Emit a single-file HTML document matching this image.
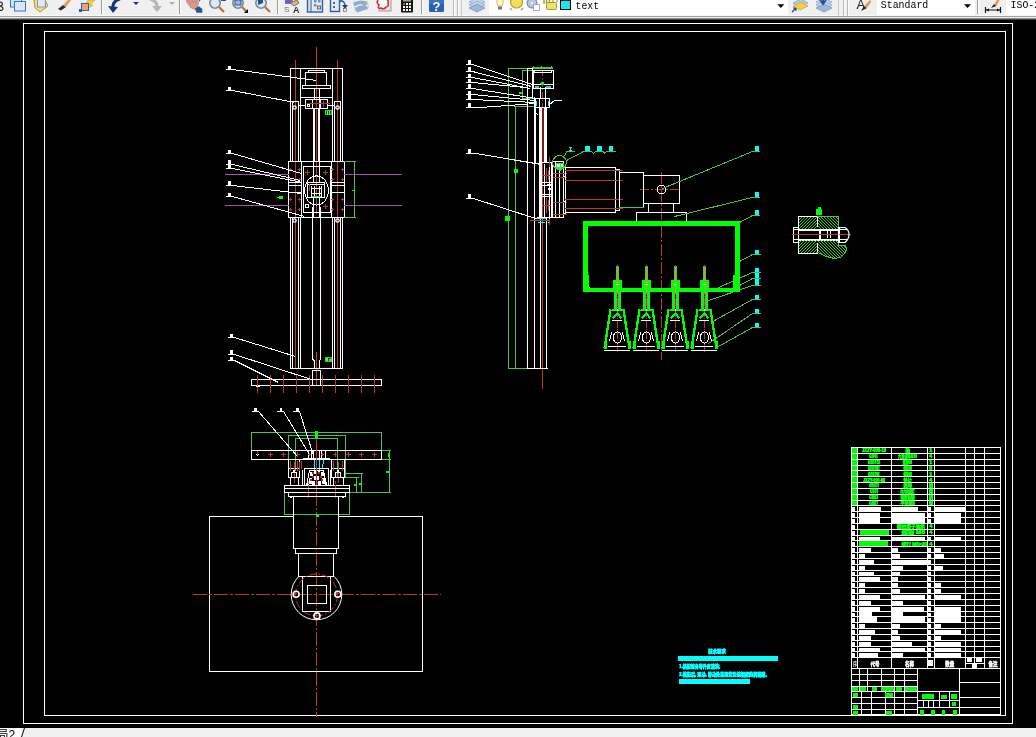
<!DOCTYPE html>
<html lang="zh">
<head>
<meta charset="utf-8">
<title>CAD drawing</title>
<style>
html,body{margin:0;padding:0;background:#000;overflow:hidden}
body{width:1036px;height:737px;position:relative;font-family:"Liberation Sans","Noto Sans CJK SC",sans-serif}
svg{position:absolute;left:0;top:0;display:block}
#crisp{shape-rendering:crispEdges}
#crisp path,#crisp rect,#crisp circle,#crisp ellipse{vector-effect:none}
text{white-space:pre}
#smooth{will-change:transform;transform:translateZ(0)}
</style>
</head>
<body>
<svg id="crisp" width="1036" height="737" viewBox="0 0 1036 737" fill="none">
<rect x="0" y="0" width="1036" height="737" fill="#000"/>
<rect x="23.5" y="23.5" width="989" height="700" fill="none" stroke="#ffffff" stroke-width="1"/>
<rect x="44.5" y="31.5" width="961" height="684" fill="none" stroke="#ffffff" stroke-width="1"/>
<rect x="0" y="728" width="1036" height="9" fill="#f0f0f0"/>
<rect x="0" y="728" width="22" height="9" fill="#fafafa"/>
<path d="M295.5 60V368" stroke="#c03434" stroke-width="1"/>
<path d="M337.5 60V368" stroke="#c03434" stroke-width="1"/>
<path d="M316.5 47V214" stroke="#c03434" stroke-width="1"/>
<path d="M316.5 352V386" stroke="#c03434" stroke-width="1"/>
<path d="M290 68.5H343" stroke="#ffffff" stroke-width="1"/>
<path d="M290.5 68V162" stroke="#ffffff" stroke-width="1"/>
<path d="M290.5 217V369" stroke="#ffffff" stroke-width="1"/>
<path d="M342.5 68V162" stroke="#ffffff" stroke-width="1"/>
<path d="M342.5 217V369" stroke="#ffffff" stroke-width="1"/>
<path d="M300.5 68V162" stroke="#ffffff" stroke-width="1"/>
<path d="M300.5 217V369" stroke="#ffffff" stroke-width="1"/>
<path d="M332.5 68V162" stroke="#ffffff" stroke-width="1"/>
<path d="M332.5 217V369" stroke="#ffffff" stroke-width="1"/>
<path d="M290 368.5H343" stroke="#ffffff" stroke-width="1"/>
<path d="M292 101.5H299" stroke="#ffffff" stroke-width="1"/>
<path d="M292.5 101V162" stroke="#ffffff" stroke-width="1"/>
<path d="M298.5 101V162" stroke="#ffffff" stroke-width="1"/>
<path d="M292.5 217V369" stroke="#ffffff" stroke-width="1"/>
<path d="M298.5 217V369" stroke="#ffffff" stroke-width="1"/>
<path d="M334 101.5H341" stroke="#ffffff" stroke-width="1"/>
<path d="M334.5 101V162" stroke="#ffffff" stroke-width="1"/>
<path d="M340.5 101V162" stroke="#ffffff" stroke-width="1"/>
<path d="M334.5 217V369" stroke="#ffffff" stroke-width="1"/>
<path d="M340.5 217V369" stroke="#ffffff" stroke-width="1"/>
<rect x="305.5" y="72.5" width="21" height="13" fill="none" stroke="#ffffff" stroke-width="1"/>
<rect x="308.5" y="70.5" width="16" height="2" fill="none" stroke="#ffffff" stroke-width="1"/>
<rect x="302.5" y="85.5" width="28" height="3" fill="none" stroke="#ffffff" stroke-width="1"/>
<path d="M314.5 88V100" stroke="#ffffff" stroke-width="1"/>
<path d="M319.5 88V100" stroke="#ffffff" stroke-width="1"/>
<path d="M300 97.5H333" stroke="#ffffff" stroke-width="1"/>
<rect x="305.5" y="99.5" width="7" height="9" fill="none" stroke="#ffffff" stroke-width="1"/>
<rect x="312.5" y="99.5" width="7" height="9" fill="none" stroke="#ffffff" stroke-width="1"/>
<rect x="320.5" y="99.5" width="7" height="9" fill="none" stroke="#ffffff" stroke-width="1"/>
<path d="M307 103.5H330" stroke="#c03434" stroke-width="1"/>
<circle cx="308.5" cy="105.5" r="1" fill="none" stroke="#ffffff" stroke-width="1"/>
<path d="M323.5 101V107" stroke="#c03434" stroke-width="1"/>
<path d="M298 105.5H306" stroke="#ffffff" stroke-width="1"/>
<path d="M327 105.5H335" stroke="#ffffff" stroke-width="1"/>
<path d="M313.5 108V162" stroke="#ffffff" stroke-width="1"/>
<path d="M314.5 108V162" stroke="#ffffff" stroke-width="1"/>
<path d="M318.5 108V162" stroke="#ffffff" stroke-width="1"/>
<path d="M319.5 108V162" stroke="#ffffff" stroke-width="1"/>
<path d="M312.5 217V360" stroke="#ffffff" stroke-width="1"/>
<path d="M320.5 217V360" stroke="#ffffff" stroke-width="1"/>
<path d="M312.5 359.5L314.5 360.5L314.5 368.5" stroke="#ffffff" stroke-width="1" fill="none"/>
<path d="M320.5 359.5L319.5 360.5L319.5 368.5" stroke="#ffffff" stroke-width="1" fill="none"/>
<path d="M312.5 370V386" stroke="#ffffff" stroke-width="1"/>
<path d="M320.5 370V386" stroke="#ffffff" stroke-width="1"/>
<path d="M312 370.5H321" stroke="#ffffff" stroke-width="1"/>
<rect x="325" y="110" width="7" height="5" fill="#30d030"/>
<rect x="326" y="111" width="5" height="3" fill="#0a5a0a"/>
<path d="M327.5 111V114" stroke="#60ff60" stroke-width="1"/>
<path d="M329.5 111V114" stroke="#60ff60" stroke-width="1"/>
<rect x="325" y="357" width="7" height="5" fill="#30d030"/>
<rect x="326" y="358" width="5" height="3" fill="#0a5a0a"/>
<rect x="326" y="358" width="2" height="3" fill="#40ff40"/>
<rect x="329" y="359" width="2" height="2" fill="#80c080"/>
<rect x="288.5" y="161.5" width="56" height="56" fill="none" stroke="#ffffff" stroke-width="1"/>
<path d="M301.5 161V218" stroke="#ffffff" stroke-width="1"/>
<path d="M331.5 161V218" stroke="#ffffff" stroke-width="1"/>
<path d="M288 182.5H302" stroke="#ffffff" stroke-width="1"/>
<path d="M331 182.5H345" stroke="#ffffff" stroke-width="1"/>
<path d="M288 185.5H302" stroke="#ffffff" stroke-width="1"/>
<path d="M331 185.5H345" stroke="#ffffff" stroke-width="1"/>
<path d="M288 192.5H302" stroke="#ffffff" stroke-width="1"/>
<path d="M331 192.5H345" stroke="#ffffff" stroke-width="1"/>
<rect x="303.5" y="166.5" width="27" height="46" fill="none" stroke="#ffffff" stroke-width="1"/>
<ellipse cx="316.5" cy="190.5" rx="11.9" ry="14.6" fill="none" stroke="#ffffff" stroke-width="1"/>
<rect x="307.5" y="182.5" width="17" height="15" fill="none" stroke="#ffffff" stroke-width="1"/>
<path d="M307 184.5H325" stroke="#ffffff" stroke-width="1"/>
<path d="M309.5 184V191" stroke="#c03434" stroke-width="1"/>
<path d="M311.5 186V197" stroke="#ffffff" stroke-width="1"/>
<path d="M314.5 186V197" stroke="#ffffff" stroke-width="1"/>
<path d="M319.5 186V197" stroke="#ffffff" stroke-width="1"/>
<path d="M321.5 186V197" stroke="#ffffff" stroke-width="1"/>
<path d="M312 188.5H322" stroke="#ffffff" stroke-width="1"/>
<path d="M312 193.5H322" stroke="#ffffff" stroke-width="1"/>
<path d="M312 196.5H321" stroke="#00ff00" stroke-width="1"/>
<path d="M313.5 161V183" stroke="#ffffff" stroke-width="1"/>
<path d="M319.5 161V183" stroke="#ffffff" stroke-width="1"/>
<path d="M313.5 197V218" stroke="#ffffff" stroke-width="1"/>
<path d="M319.5 197V218" stroke="#ffffff" stroke-width="1"/>
<path d="M312.5 207V218" stroke="#ffffff" stroke-width="1"/>
<path d="M320.5 207V218" stroke="#ffffff" stroke-width="1"/>
<rect x="305.5" y="204.5" width="3" height="3" fill="none" stroke="#ffffff" stroke-width="1"/>
<path d="M289 169.5H292" stroke="#c03434" stroke-width="1"/>
<path d="M290.5 168V171" stroke="#c03434" stroke-width="1"/>
<path d="M298 169.5H301" stroke="#c03434" stroke-width="1"/>
<path d="M299.5 168V171" stroke="#c03434" stroke-width="1"/>
<path d="M289 179.5H292" stroke="#c03434" stroke-width="1"/>
<path d="M290.5 178V181" stroke="#c03434" stroke-width="1"/>
<path d="M298 179.5H301" stroke="#c03434" stroke-width="1"/>
<path d="M299.5 178V181" stroke="#c03434" stroke-width="1"/>
<path d="M289 199.5H292" stroke="#c03434" stroke-width="1"/>
<path d="M290.5 198V201" stroke="#c03434" stroke-width="1"/>
<path d="M298 199.5H301" stroke="#c03434" stroke-width="1"/>
<path d="M299.5 198V201" stroke="#c03434" stroke-width="1"/>
<path d="M289 209.5H292" stroke="#c03434" stroke-width="1"/>
<path d="M290.5 208V211" stroke="#c03434" stroke-width="1"/>
<path d="M298 209.5H301" stroke="#c03434" stroke-width="1"/>
<path d="M299.5 208V211" stroke="#c03434" stroke-width="1"/>
<path d="M331 169.5H334" stroke="#c03434" stroke-width="1"/>
<path d="M332.5 168V171" stroke="#c03434" stroke-width="1"/>
<path d="M341 169.5H344" stroke="#c03434" stroke-width="1"/>
<path d="M342.5 168V171" stroke="#c03434" stroke-width="1"/>
<path d="M331 179.5H334" stroke="#c03434" stroke-width="1"/>
<path d="M332.5 178V181" stroke="#c03434" stroke-width="1"/>
<path d="M341 179.5H344" stroke="#c03434" stroke-width="1"/>
<path d="M342.5 178V181" stroke="#c03434" stroke-width="1"/>
<path d="M331 199.5H334" stroke="#c03434" stroke-width="1"/>
<path d="M332.5 198V201" stroke="#c03434" stroke-width="1"/>
<path d="M341 199.5H344" stroke="#c03434" stroke-width="1"/>
<path d="M342.5 198V201" stroke="#c03434" stroke-width="1"/>
<path d="M331 209.5H334" stroke="#c03434" stroke-width="1"/>
<path d="M332.5 208V211" stroke="#c03434" stroke-width="1"/>
<path d="M341 209.5H344" stroke="#c03434" stroke-width="1"/>
<path d="M342.5 208V211" stroke="#c03434" stroke-width="1"/>
<path d="M305 172.5H310" stroke="#c03434" stroke-width="1"/>
<path d="M307.5 170V175" stroke="#c03434" stroke-width="1"/>
<path d="M323 172.5H328" stroke="#c03434" stroke-width="1"/>
<path d="M325.5 170V175" stroke="#c03434" stroke-width="1"/>
<path d="M323 206.5H328" stroke="#c03434" stroke-width="1"/>
<path d="M325.5 204V209" stroke="#c03434" stroke-width="1"/>
<path d="M225 174.5H289" stroke="#aa50aa" stroke-width="1"/>
<path d="M344 174.5H402" stroke="#aa50aa" stroke-width="1"/>
<path d="M225 205.5H289" stroke="#aa50aa" stroke-width="1"/>
<path d="M344 205.5H402" stroke="#aa50aa" stroke-width="1"/>
<path d="M344 161.5H356" stroke="#50c050" stroke-width="1"/>
<path d="M344 217.5H356" stroke="#50c050" stroke-width="1"/>
<path d="M354.5 161V218" stroke="#50c050" stroke-width="1"/>
<path d="M352 190.5H355" stroke="#00ff00" stroke-width="1"/>
<rect x="279" y="196" width="4" height="3" fill="#00ff00"/>
<rect x="277" y="197" width="2" height="1" fill="#00ff00"/>
<rect x="251.5" y="379.5" width="130" height="6" fill="none" stroke="#ffffff" stroke-width="1"/>
<path d="M257.5 375V393" stroke="#c03434" stroke-width="1"/>
<path d="M270.5 375V393" stroke="#c03434" stroke-width="1"/>
<path d="M283.5 375V393" stroke="#c03434" stroke-width="1"/>
<path d="M296.5 375V393" stroke="#c03434" stroke-width="1"/>
<path d="M309.5 375V393" stroke="#c03434" stroke-width="1"/>
<path d="M322.5 375V393" stroke="#c03434" stroke-width="1"/>
<path d="M335.5 375V393" stroke="#c03434" stroke-width="1"/>
<path d="M348.5 375V393" stroke="#c03434" stroke-width="1"/>
<path d="M361.5 375V393" stroke="#c03434" stroke-width="1"/>
<path d="M374.5 375V393" stroke="#c03434" stroke-width="1"/>
<path d="M256 386.5H260" stroke="#ffffff" stroke-width="1"/>
<rect x="228" y="66" width="3" height="4" fill="#ffffff"/>
<path d="M226 69.5H233" stroke="#ffffff" stroke-width="1"/>
<path d="M232.5 69.5L316.5 80.5" stroke="#ffffff" stroke-width="1"/>
<rect x="228" y="87" width="3" height="4" fill="#ffffff"/>
<path d="M226 90.5H233" stroke="#ffffff" stroke-width="1"/>
<path d="M232.5 90.5L294.5 102.5" stroke="#ffffff" stroke-width="1"/>
<rect x="228" y="150" width="3" height="4" fill="#ffffff"/>
<path d="M226 153.5H233" stroke="#ffffff" stroke-width="1"/>
<path d="M232.5 153.5L301.5 173.5" stroke="#ffffff" stroke-width="1"/>
<rect x="228" y="160" width="3" height="4" fill="#ffffff"/>
<path d="M226 164.5H233" stroke="#ffffff" stroke-width="1"/>
<path d="M232.5 164.5L300.5 180.5" stroke="#ffffff" stroke-width="1"/>
<rect x="228" y="165" width="3" height="4" fill="#ffffff"/>
<path d="M226 168.5H233" stroke="#ffffff" stroke-width="1"/>
<path d="M232.5 168.5L302.5 182.5" stroke="#ffffff" stroke-width="1"/>
<rect x="228" y="181" width="3" height="4" fill="#ffffff"/>
<path d="M226 185.5H233" stroke="#ffffff" stroke-width="1"/>
<path d="M232.5 185.5L301.5 193.5" stroke="#ffffff" stroke-width="1"/>
<rect x="228" y="193" width="3" height="4" fill="#ffffff"/>
<path d="M226 196.5H233" stroke="#ffffff" stroke-width="1"/>
<path d="M232.5 196.5L304.5 216.5" stroke="#ffffff" stroke-width="1"/>
<rect x="230" y="334" width="3" height="4" fill="#ffffff"/>
<path d="M228 337.5H235" stroke="#ffffff" stroke-width="1"/>
<path d="M234.5 337.5L295.5 356.5" stroke="#ffffff" stroke-width="1"/>
<rect x="230" y="350" width="3" height="4" fill="#ffffff"/>
<path d="M228 354.5H235" stroke="#ffffff" stroke-width="1"/>
<path d="M234.5 354.5L311.5 379.5" stroke="#ffffff" stroke-width="1"/>
<rect x="230" y="357" width="3" height="4" fill="#ffffff"/>
<path d="M228 360.5H235" stroke="#ffffff" stroke-width="1"/>
<path d="M234.5 360.5L278.5 382.5" stroke="#ffffff" stroke-width="1"/>
<path d="M542.5 70V109" stroke="#c03434" stroke-width="1" stroke-dasharray="6 2 1 2"/>
<path d="M542.5 218V389" stroke="#c03434" stroke-width="1"/>
<path d="M661.5 172V360" stroke="#c03434" stroke-width="1" stroke-dasharray="12 2 2 2"/>
<path d="M640 189.5H681" stroke="#c03434" stroke-width="1" stroke-dasharray="9 2 2 2"/>
<path d="M508.5 68V369" stroke="#50c050" stroke-width="1"/>
<path d="M508 68.5H553" stroke="#50c050" stroke-width="1"/>
<path d="M532 67.5H553" stroke="#50c050" stroke-width="1"/>
<path d="M533.5 66V69" stroke="#00ff00" stroke-width="1"/>
<path d="M541.5 66V69" stroke="#00ff00" stroke-width="1"/>
<path d="M551.5 66V69" stroke="#00ff00" stroke-width="1"/>
<path d="M522.5 70V99" stroke="#50c050" stroke-width="1"/>
<path d="M522 70.5H533" stroke="#50c050" stroke-width="1"/>
<path d="M522 98.5H536" stroke="#50c050" stroke-width="1"/>
<rect x="519" y="92" width="4" height="2" fill="#00ff00"/>
<path d="M515.5 106V369" stroke="#50c050" stroke-width="1"/>
<path d="M514 106.5H536" stroke="#50c050" stroke-width="1"/>
<rect x="514" y="169" width="4" height="4" fill="#00ff00"/>
<rect x="505" y="216" width="5" height="5" fill="#00ff00"/>
<path d="M508 368.5H548" stroke="#50c050" stroke-width="1"/>
<path d="M527.5 68V369" stroke="#ffffff" stroke-width="1"/>
<path d="M532.5 68V99" stroke="#ffffff" stroke-width="1"/>
<path d="M534.5 97V369" stroke="#ffffff" stroke-width="1"/>
<path d="M535.5 107V163" stroke="#ffffff" stroke-width="1"/>
<path d="M527 68.5H533" stroke="#ffffff" stroke-width="1"/>
<path d="M527 368.5H548" stroke="#ffffff" stroke-width="1"/>
<rect x="533.5" y="70.5" width="20" height="18" fill="none" stroke="#ffffff" stroke-width="1"/>
<path d="M534 72.5H552" stroke="#ffffff" stroke-width="1"/>
<path d="M534.5 70V73" stroke="#ffffff" stroke-width="1"/>
<path d="M551.5 70V73" stroke="#ffffff" stroke-width="1"/>
<path d="M533 84.5H554" stroke="#ffffff" stroke-width="1"/>
<rect x="535" y="86" width="4" height="2" fill="#20d8d8"/>
<rect x="546" y="86" width="5" height="2" fill="#20d8d8"/>
<path d="M539.5 84.5L541.5 82.5L543.5 84.5" stroke="#00ff00" stroke-width="1" fill="none"/>
<rect x="541" y="82" width="3" height="3" fill="#00ff00"/>
<path d="M540.5 87V99" stroke="#ffffff" stroke-width="1"/>
<path d="M545.5 87V99" stroke="#ffffff" stroke-width="1"/>
<rect x="535.5" y="98.5" width="14" height="9" fill="none" stroke="#ffffff" stroke-width="1"/>
<path d="M539.5 98V108" stroke="#ffffff" stroke-width="1"/>
<path d="M545.5 98V108" stroke="#ffffff" stroke-width="1"/>
<rect x="536" y="101" width="1" height="5" fill="#00ffff"/>
<rect x="548" y="101" width="1" height="5" fill="#00ffff"/>
<path d="M549.5 104.5L554.5 100.5L561.5 100.5" stroke="#ffffff" stroke-width="1" fill="none"/>
<path d="M535.5 112.5L538.5 115.5L538.5 115.5" stroke="#ffffff" stroke-width="1" fill="none"/>
<rect x="539" y="108" width="3" height="110" fill="#ffffff"/>
<rect x="544" y="108" width="3" height="55" fill="#ffffff"/>
<rect x="542" y="108" width="2" height="55" fill="#7a1c1c"/>
<rect x="542" y="163" width="1" height="55" fill="#c03434"/>
<path d="M540.5 218V369" stroke="#ffffff" stroke-width="1"/>
<path d="M546.5 218V369" stroke="#ffffff" stroke-width="1"/>
<rect x="541.5" y="162.5" width="10" height="55" fill="none" stroke="#ffffff" stroke-width="1"/>
<path d="M544.5 164V217" stroke="#ffffff" stroke-width="1"/>
<path d="M549.5 164V217" stroke="#ffffff" stroke-width="1"/>
<path d="M541 182.5H552" stroke="#ffffff" stroke-width="1"/>
<path d="M541 185.5H552" stroke="#ffffff" stroke-width="1"/>
<path d="M541 194.5H552" stroke="#ffffff" stroke-width="1"/>
<path d="M541 196.5H552" stroke="#ffffff" stroke-width="1"/>
<rect x="547" y="184" width="4" height="2" fill="#ffffff"/>
<rect x="548" y="188" width="3" height="2" fill="#ffffff"/>
<path d="M543 175.5H551" stroke="#c03434" stroke-width="1"/>
<path d="M543 205.5H551" stroke="#c03434" stroke-width="1"/>
<path d="M546.5 168V182" stroke="#c03434" stroke-width="1"/>
<path d="M546.5 198V213" stroke="#c03434" stroke-width="1"/>
<path d="M548.5 170V180" stroke="#c03434" stroke-width="1"/>
<path d="M548.5 200V211" stroke="#c03434" stroke-width="1"/>
<rect x="552.5" y="161.5" width="11" height="56" fill="none" stroke="#ffffff" stroke-width="1"/>
<path d="M555.5 161V218" stroke="#ffffff" stroke-width="1"/>
<path d="M559.5 165V218" stroke="#ffffff" stroke-width="1"/>
<rect x="564" y="176" width="2" height="2" fill="#ffffff"/>
<rect x="564" y="201" width="2" height="2" fill="#ffffff"/>
<rect x="564" y="213" width="2" height="2" fill="#ffffff"/>
<path d="M553 173.5H567" stroke="#c03434" stroke-width="1"/>
<path d="M553 177.5H567" stroke="#c03434" stroke-width="1"/>
<path d="M553 202.5H567" stroke="#c03434" stroke-width="1"/>
<path d="M553 214.5H567" stroke="#c03434" stroke-width="1"/>
<path d="M549.5 157V167" stroke="#c03434" stroke-width="1"/>
<path d="M530 220.5H549" stroke="#c03434" stroke-width="1"/>
<rect x="536" y="218" width="10" height="1" fill="#00ffff"/>
<rect x="538" y="222" width="7" height="1" fill="#00ffff"/>
<path d="M534.5 219.5L537.5 217.5L549.5 217.5L549.5 221.5L547.5 223.5" stroke="#ffffff" stroke-width="1" fill="none"/>
<path d="M549.5 219V225" stroke="#c03434" stroke-width="1"/>
<rect x="565.5" y="167.5" width="50" height="45" fill="none" stroke="#ffffff" stroke-width="1"/>
<path d="M615.5 169.5L619.5 169.5L619.5 210.5L615.5 210.5" stroke="#ffffff" stroke-width="1" fill="none"/>
<path d="M565 170.5H623" stroke="#c03434" stroke-width="1"/>
<path d="M565 180.5H623" stroke="#c03434" stroke-width="1"/>
<path d="M565 199.5H623" stroke="#c03434" stroke-width="1"/>
<path d="M565 208.5H623" stroke="#c03434" stroke-width="1"/>
<rect x="619.5" y="172.5" width="24" height="35" fill="none" stroke="#ffffff" stroke-width="1"/>
<path d="M619 207.5H644" stroke="#50c050" stroke-width="1"/>
<rect x="643.5" y="175.5" width="36" height="28" fill="none" stroke="#ffffff" stroke-width="1"/>
<circle cx="661.5" cy="189.5" r="4.4" fill="none" stroke="#ffffff" stroke-width="1"/>
<path d="M648.5 203.5L648.5 212.5L673.5 212.5L673.5 203.5" stroke="#ffffff" stroke-width="1" fill="none"/>
<path d="M636.5 221.5L636.5 212.5L686.5 212.5L686.5 221.5" stroke="#ffffff" stroke-width="1" fill="none"/>
<circle cx="559.5" cy="162.5" r="6.9" fill="none" stroke="#50c050" stroke-width="1"/>
<rect x="556" y="163" width="8" height="6" fill="#40e040"/>
<rect x="557" y="164" width="3" height="3" fill="#d0ffd0"/>
<rect x="561" y="164" width="2" height="3" fill="#d0ffd0"/>
<rect x="559" y="167" width="2" height="4" fill="#40e040"/>
<path d="M564.5 156.5L566.5 151.5L574.5 151.5" stroke="#50c050" stroke-width="1" fill="none"/>
<rect x="569" y="147" width="3" height="1" fill="#00ffff"/>
<path d="M570.5 147V152" stroke="#00ffff" stroke-width="1"/>
<rect x="569" y="150" width="3" height="1" fill="#00ffff"/>
<path d="M566.5 160.5L583.5 151.5L591.5 151.5L593.5 153.5L595.5 151.5L603.5 151.5L604.5 153.5L606.5 151.5L615.5 151.5" stroke="#50c050" stroke-width="1" fill="none"/>
<rect x="585" y="146" width="5" height="5" fill="#00ffff"/>
<rect x="597" y="146" width="5" height="5" fill="#00ffff"/>
<rect x="609" y="146" width="4" height="5" fill="#00ffff"/>
<rect x="583" y="221" width="157" height="5" fill="#00ff00"/>
<rect x="583" y="221" width="5" height="71" fill="#00ff00"/>
<rect x="735" y="221" width="5" height="71" fill="#00ff00"/>
<rect x="583" y="288" width="157" height="4" fill="#00ff00"/>
<rect x="588" y="275" width="1" height="13" fill="#00ff00"/>
<rect x="733" y="275" width="2" height="13" fill="#00ff00"/>
<rect x="589" y="287" width="1" height="1" fill="#ffffff"/>
<path d="M617.5 265V353" stroke="#c03434" stroke-width="1" stroke-dasharray="8 1 1 1"/>
<path d="M616.5 266V310" stroke="#50c050" stroke-width="1"/>
<path d="M618.5 266V310" stroke="#50c050" stroke-width="1"/>
<path d="M617.5 267V291" stroke="#c8a030" stroke-width="1"/>
<rect x="613" y="280" width="9" height="12" fill="#00ff00"/>
<path d="M617.5 280V293" stroke="#c8a030" stroke-width="1"/>
<rect x="616" y="284" width="3" height="1" fill="#e0ffe0"/>
<rect x="614" y="292" width="2" height="17" fill="#00ff00"/>
<rect x="619" y="292" width="2" height="17" fill="#00ff00"/>
<path d="M611.5 309.5L623.5 309.5" stroke="#00ff00" stroke-width="2" fill="none"/>
<path d="M610.5 309.5L604.5 348.5" stroke="#00ff00" stroke-width="2.4" fill="none"/>
<path d="M623.5 309.5L629.5 348.5" stroke="#00ff00" stroke-width="2.4" fill="none"/>
<path d="M612.5 318.5L617.5 313.5L621.5 318.5" stroke="#00ff00" stroke-width="2" fill="none"/>
<rect x="604" y="341" width="3" height="8" fill="#00ff00"/>
<rect x="628" y="341" width="3" height="8" fill="#00ff00"/>
<path d="M612 320.5H622" stroke="#ffffff" stroke-width="1"/>
<ellipse cx="617.5" cy="337.5" rx="4.2" ry="5.6" fill="none" stroke="#ffffff" stroke-width="1"/>
<path d="M611.5 332.5L609.5 341.5" stroke="#ffffff" stroke-width="1"/>
<path d="M622.5 332.5L624.5 341.5" stroke="#ffffff" stroke-width="1"/>
<path d="M608 346.5H626" stroke="#ffffff" stroke-width="1"/>
<path d="M604 350.5H630" stroke="#ffffff" stroke-width="1"/>
<rect x="617" y="309" width="1" height="2" fill="#ffffff"/>
<path d="M646.5 265V353" stroke="#c03434" stroke-width="1" stroke-dasharray="8 1 1 1"/>
<path d="M645.5 266V310" stroke="#50c050" stroke-width="1"/>
<path d="M647.5 266V310" stroke="#50c050" stroke-width="1"/>
<path d="M646.5 267V291" stroke="#c8a030" stroke-width="1"/>
<rect x="642" y="280" width="9" height="12" fill="#00ff00"/>
<path d="M646.5 280V293" stroke="#c8a030" stroke-width="1"/>
<rect x="645" y="284" width="3" height="1" fill="#e0ffe0"/>
<rect x="643" y="292" width="2" height="17" fill="#00ff00"/>
<rect x="648" y="292" width="2" height="17" fill="#00ff00"/>
<path d="M640.5 309.5L652.5 309.5" stroke="#00ff00" stroke-width="2" fill="none"/>
<path d="M639.5 309.5L633.5 348.5" stroke="#00ff00" stroke-width="2.4" fill="none"/>
<path d="M652.5 309.5L658.5 348.5" stroke="#00ff00" stroke-width="2.4" fill="none"/>
<path d="M641.5 318.5L646.5 313.5L650.5 318.5" stroke="#00ff00" stroke-width="2" fill="none"/>
<rect x="633" y="341" width="3" height="8" fill="#00ff00"/>
<rect x="657" y="341" width="3" height="8" fill="#00ff00"/>
<path d="M641 320.5H651" stroke="#ffffff" stroke-width="1"/>
<ellipse cx="646.5" cy="337.5" rx="4.2" ry="5.6" fill="none" stroke="#ffffff" stroke-width="1"/>
<path d="M640.5 332.5L638.5 341.5" stroke="#ffffff" stroke-width="1"/>
<path d="M651.5 332.5L653.5 341.5" stroke="#ffffff" stroke-width="1"/>
<path d="M637 346.5H655" stroke="#ffffff" stroke-width="1"/>
<path d="M633 350.5H659" stroke="#ffffff" stroke-width="1"/>
<rect x="646" y="309" width="1" height="2" fill="#ffffff"/>
<path d="M675.5 265V353" stroke="#c03434" stroke-width="1" stroke-dasharray="8 1 1 1"/>
<path d="M674.5 266V310" stroke="#50c050" stroke-width="1"/>
<path d="M676.5 266V310" stroke="#50c050" stroke-width="1"/>
<path d="M675.5 267V291" stroke="#c8a030" stroke-width="1"/>
<rect x="671" y="280" width="9" height="12" fill="#00ff00"/>
<path d="M675.5 280V293" stroke="#c8a030" stroke-width="1"/>
<rect x="674" y="284" width="3" height="1" fill="#e0ffe0"/>
<rect x="672" y="292" width="2" height="17" fill="#00ff00"/>
<rect x="677" y="292" width="2" height="17" fill="#00ff00"/>
<path d="M669.5 309.5L681.5 309.5" stroke="#00ff00" stroke-width="2" fill="none"/>
<path d="M668.5 309.5L662.5 348.5" stroke="#00ff00" stroke-width="2.4" fill="none"/>
<path d="M681.5 309.5L687.5 348.5" stroke="#00ff00" stroke-width="2.4" fill="none"/>
<path d="M670.5 318.5L675.5 313.5L679.5 318.5" stroke="#00ff00" stroke-width="2" fill="none"/>
<rect x="662" y="341" width="3" height="8" fill="#00ff00"/>
<rect x="686" y="341" width="3" height="8" fill="#00ff00"/>
<path d="M670 320.5H680" stroke="#ffffff" stroke-width="1"/>
<ellipse cx="675.5" cy="337.5" rx="4.2" ry="5.6" fill="none" stroke="#ffffff" stroke-width="1"/>
<path d="M669.5 332.5L667.5 341.5" stroke="#ffffff" stroke-width="1"/>
<path d="M680.5 332.5L682.5 341.5" stroke="#ffffff" stroke-width="1"/>
<path d="M666 346.5H684" stroke="#ffffff" stroke-width="1"/>
<path d="M662 350.5H688" stroke="#ffffff" stroke-width="1"/>
<rect x="675" y="309" width="1" height="2" fill="#ffffff"/>
<path d="M704.5 265V353" stroke="#c03434" stroke-width="1" stroke-dasharray="8 1 1 1"/>
<path d="M703.5 266V310" stroke="#50c050" stroke-width="1"/>
<path d="M705.5 266V310" stroke="#50c050" stroke-width="1"/>
<path d="M704.5 267V291" stroke="#c8a030" stroke-width="1"/>
<rect x="700" y="280" width="9" height="12" fill="#00ff00"/>
<path d="M704.5 280V293" stroke="#c8a030" stroke-width="1"/>
<rect x="703" y="284" width="3" height="1" fill="#e0ffe0"/>
<rect x="701" y="292" width="2" height="17" fill="#00ff00"/>
<rect x="706" y="292" width="2" height="17" fill="#00ff00"/>
<path d="M698.5 309.5L710.5 309.5" stroke="#00ff00" stroke-width="2" fill="none"/>
<path d="M697.5 309.5L691.5 348.5" stroke="#00ff00" stroke-width="2.4" fill="none"/>
<path d="M710.5 309.5L716.5 348.5" stroke="#00ff00" stroke-width="2.4" fill="none"/>
<path d="M699.5 318.5L704.5 313.5L708.5 318.5" stroke="#00ff00" stroke-width="2" fill="none"/>
<rect x="691" y="341" width="3" height="8" fill="#00ff00"/>
<rect x="715" y="341" width="3" height="8" fill="#00ff00"/>
<path d="M699 320.5H709" stroke="#ffffff" stroke-width="1"/>
<ellipse cx="704.5" cy="337.5" rx="4.2" ry="5.6" fill="none" stroke="#ffffff" stroke-width="1"/>
<path d="M698.5 332.5L696.5 341.5" stroke="#ffffff" stroke-width="1"/>
<path d="M709.5 332.5L711.5 341.5" stroke="#ffffff" stroke-width="1"/>
<path d="M695 346.5H713" stroke="#ffffff" stroke-width="1"/>
<path d="M691 350.5H717" stroke="#ffffff" stroke-width="1"/>
<rect x="704" y="309" width="1" height="2" fill="#ffffff"/>
<rect x="755" y="146" width="4" height="5" fill="#00ffff"/>
<path d="M752 151.5H760" stroke="#50c050" stroke-width="1"/>
<path d="M752.5 151.5L662.5 188.5" stroke="#50c050" stroke-width="1"/>
<rect x="755" y="192" width="4" height="5" fill="#00ffff"/>
<path d="M752 197.5H760" stroke="#50c050" stroke-width="1"/>
<path d="M752.5 197.5L674.5 216.5" stroke="#50c050" stroke-width="1"/>
<rect x="755" y="210" width="4" height="5" fill="#00ffff"/>
<path d="M752 215.5H760" stroke="#50c050" stroke-width="1"/>
<path d="M752.5 215.5L739.5 222.5" stroke="#50c050" stroke-width="1"/>
<rect x="755" y="250" width="4" height="4" fill="#00ffff"/>
<path d="M752 254.5H761" stroke="#50c050" stroke-width="1"/>
<path d="M752.5 254.5L739.5 261.5" stroke="#50c050" stroke-width="1"/>
<rect x="755" y="268" width="4" height="4" fill="#00ffff"/>
<path d="M752 272.5H761" stroke="#50c050" stroke-width="1"/>
<path d="M752.5 272.5L718.5 287.5" stroke="#50c050" stroke-width="1"/>
<rect x="755" y="273" width="4" height="5" fill="#00ffff"/>
<path d="M752 278.5H761" stroke="#50c050" stroke-width="1"/>
<path d="M752.5 278.5L739.5 285.5" stroke="#50c050" stroke-width="1"/>
<rect x="755" y="279" width="4" height="6" fill="#00ffff"/>
<path d="M752 285.5H761" stroke="#50c050" stroke-width="1"/>
<path d="M752.5 285.5L708.5 300.5" stroke="#50c050" stroke-width="1"/>
<rect x="755" y="295" width="4" height="4" fill="#00ffff"/>
<path d="M752 299.5H761" stroke="#50c050" stroke-width="1"/>
<path d="M752.5 299.5L714.5 320.5" stroke="#50c050" stroke-width="1"/>
<rect x="755" y="309" width="4" height="4" fill="#00ffff"/>
<path d="M752 313.5H761" stroke="#50c050" stroke-width="1"/>
<path d="M752.5 313.5L708.5 343.5" stroke="#50c050" stroke-width="1"/>
<rect x="755" y="323" width="4" height="4" fill="#00ffff"/>
<path d="M752 327.5H761" stroke="#50c050" stroke-width="1"/>
<path d="M752.5 327.5L718.5 346.5" stroke="#50c050" stroke-width="1"/>
<rect x="468" y="60" width="3" height="4" fill="#ffffff"/>
<path d="M466 64.5H473" stroke="#ffffff" stroke-width="1"/>
<path d="M472.5 64.5L532.5 84.5" stroke="#ffffff" stroke-width="1"/>
<rect x="468" y="67" width="3" height="4" fill="#ffffff"/>
<path d="M466 71.5H473" stroke="#ffffff" stroke-width="1"/>
<path d="M472.5 71.5L531.5 86.5" stroke="#ffffff" stroke-width="1"/>
<rect x="468" y="74" width="3" height="4" fill="#ffffff"/>
<path d="M466 77.5H473" stroke="#ffffff" stroke-width="1"/>
<path d="M472.5 77.5L530.5 88.5" stroke="#ffffff" stroke-width="1"/>
<rect x="468" y="79" width="3" height="4" fill="#ffffff"/>
<path d="M466 82.5H473" stroke="#ffffff" stroke-width="1"/>
<path d="M472.5 82.5L525.5 87.5" stroke="#ffffff" stroke-width="1"/>
<rect x="468" y="84" width="3" height="4" fill="#ffffff"/>
<path d="M466 88.5H473" stroke="#ffffff" stroke-width="1"/>
<path d="M472.5 88.5L535.5 98.5" stroke="#ffffff" stroke-width="1"/>
<rect x="468" y="91" width="3" height="4" fill="#ffffff"/>
<path d="M466 94.5H473" stroke="#ffffff" stroke-width="1"/>
<path d="M472.5 94.5L535.5 100.5" stroke="#ffffff" stroke-width="1"/>
<rect x="468" y="95" width="3" height="4" fill="#ffffff"/>
<path d="M466 99.5H473" stroke="#ffffff" stroke-width="1"/>
<path d="M472.5 99.5L535.5 102.5" stroke="#ffffff" stroke-width="1"/>
<rect x="468" y="103" width="3" height="4" fill="#ffffff"/>
<path d="M466 107.5H473" stroke="#ffffff" stroke-width="1"/>
<path d="M466 107.5H481" stroke="#ffffff" stroke-width="1"/>
<path d="M480.5 107.5L535.5 103.5" stroke="#ffffff" stroke-width="1"/>
<rect x="468" y="149" width="3" height="4" fill="#ffffff"/>
<path d="M466 153.5H473" stroke="#ffffff" stroke-width="1"/>
<path d="M466 153.5H476" stroke="#ffffff" stroke-width="1"/>
<path d="M475.5 153.5L541.5 164.5" stroke="#ffffff" stroke-width="1"/>
<rect x="468" y="194" width="3" height="4" fill="#ffffff"/>
<path d="M466 198.5H473" stroke="#ffffff" stroke-width="1"/>
<path d="M466 198.5H474" stroke="#ffffff" stroke-width="1"/>
<path d="M473.5 198.5L535.5 218.5" stroke="#ffffff" stroke-width="1"/>
<path d="M209 516.5H294" stroke="#ffffff" stroke-width="1"/>
<path d="M338 516.5H423" stroke="#ffffff" stroke-width="1"/>
<path d="M209.5 516V672" stroke="#ffffff" stroke-width="1"/>
<path d="M422.5 516V672" stroke="#ffffff" stroke-width="1"/>
<path d="M209 671.5H423" stroke="#ffffff" stroke-width="1"/>
<path d="M316.5 432V717" stroke="#c03434" stroke-width="1" stroke-dasharray="14 2 2 2"/>
<path d="M193 594.5H441" stroke="#c03434" stroke-width="1" stroke-dasharray="14 2 3 2"/>
<path d="M251 432.5H382" stroke="#50c050" stroke-width="1"/>
<path d="M251.5 432V451" stroke="#50c050" stroke-width="1"/>
<path d="M381.5 432V451" stroke="#50c050" stroke-width="1"/>
<path d="M288.5 435V478" stroke="#50c050" stroke-width="1"/>
<path d="M345.5 435V478" stroke="#50c050" stroke-width="1"/>
<path d="M288 435.5H346" stroke="#50c050" stroke-width="1"/>
<path d="M295.5 438V471" stroke="#50c050" stroke-width="1"/>
<path d="M337.5 438V478" stroke="#50c050" stroke-width="1"/>
<path d="M295 438.5H338" stroke="#50c050" stroke-width="1"/>
<rect x="315" y="431" width="3" height="7" fill="#00ff00"/>
<path d="M381 450.5H391" stroke="#50c050" stroke-width="1"/>
<path d="M389.5 450V493" stroke="#50c050" stroke-width="1"/>
<path d="M350 492.5H391" stroke="#50c050" stroke-width="1"/>
<path d="M381 459.5H391" stroke="#50c050" stroke-width="1"/>
<rect x="388" y="453" width="2" height="4" fill="#00ff00"/>
<rect x="386" y="471" width="3" height="2" fill="#00ff00"/>
<path d="M345 473.5H363" stroke="#50c050" stroke-width="1"/>
<path d="M361.5 473V493" stroke="#50c050" stroke-width="1"/>
<path d="M342 477.5H359" stroke="#50c050" stroke-width="1"/>
<path d="M356.5 477V493" stroke="#50c050" stroke-width="1"/>
<rect x="359" y="483" width="3" height="2" fill="#00ff00"/>
<rect x="354" y="484" width="2" height="2" fill="#00ff00"/>
<path d="M284.5 492V515" stroke="#50c050" stroke-width="1"/>
<path d="M349.5 492V515" stroke="#50c050" stroke-width="1"/>
<path d="M284 514.5H350" stroke="#50c050" stroke-width="1"/>
<rect x="316" y="514" width="3" height="3" fill="#00ff00"/>
<rect x="251.5" y="450.5" width="130" height="9" fill="none" stroke="#ffffff" stroke-width="1"/>
<path d="M268 454.5H273" stroke="#c03434" stroke-width="1"/>
<path d="M270.5 452V457" stroke="#c03434" stroke-width="1"/>
<path d="M281 454.5H286" stroke="#c03434" stroke-width="1"/>
<path d="M283.5 452V457" stroke="#c03434" stroke-width="1"/>
<path d="M295 454.5H300" stroke="#c03434" stroke-width="1"/>
<path d="M297.5 452V457" stroke="#c03434" stroke-width="1"/>
<path d="M333 454.5H338" stroke="#c03434" stroke-width="1"/>
<path d="M335.5 452V457" stroke="#c03434" stroke-width="1"/>
<path d="M346 454.5H351" stroke="#c03434" stroke-width="1"/>
<path d="M348.5 452V457" stroke="#c03434" stroke-width="1"/>
<path d="M359 454.5H364" stroke="#c03434" stroke-width="1"/>
<path d="M361.5 452V457" stroke="#c03434" stroke-width="1"/>
<path d="M372 454.5H377" stroke="#c03434" stroke-width="1"/>
<path d="M374.5 452V457" stroke="#c03434" stroke-width="1"/>
<path d="M256 454.5H259" stroke="#ffffff" stroke-width="1"/>
<path d="M257.5 453V456" stroke="#ffffff" stroke-width="1"/>
<path d="M257.5 451V455" stroke="#c03434" stroke-width="1"/>
<rect x="308.5" y="450.5" width="17" height="9" fill="none" stroke="#ffffff" stroke-width="1"/>
<path d="M311.5 451V459" stroke="#ffffff" stroke-width="1"/>
<path d="M313.5 451V459" stroke="#ffffff" stroke-width="1"/>
<path d="M319.5 451V459" stroke="#ffffff" stroke-width="1"/>
<path d="M321.5 451V459" stroke="#ffffff" stroke-width="1"/>
<path d="M308 454.5H311" stroke="#c03434" stroke-width="1"/>
<path d="M309.5 453V456" stroke="#c03434" stroke-width="1"/>
<path d="M321 454.5H324" stroke="#c03434" stroke-width="1"/>
<path d="M322.5 453V456" stroke="#c03434" stroke-width="1"/>
<rect x="303" y="458" width="27" height="2" fill="#ffffff"/>
<path d="M314.5 460V472" stroke="#00ffff" stroke-width="1"/>
<path d="M319.5 460V472" stroke="#00ffff" stroke-width="1"/>
<path d="M323.5 460.5L322.5 468.5" stroke="#00ffff" stroke-width="1"/>
<rect x="288.5" y="459.5" width="11" height="18" fill="none" stroke="#ffffff" stroke-width="1"/>
<path d="M288 468.5H300" stroke="#ffffff" stroke-width="1"/>
<path d="M294.5 462V483" stroke="#c03434" stroke-width="1"/>
<path d="M290.5 461V471" stroke="#c03434" stroke-width="1"/>
<path d="M297.5 461V471" stroke="#c03434" stroke-width="1"/>
<rect x="291.5" y="472.5" width="5" height="5" fill="none" stroke="#ffffff" stroke-width="1"/>
<rect x="293" y="470" width="2" height="2" fill="#ffffff"/>
<rect x="290.5" y="477.5" width="8" height="8" fill="none" stroke="#ffffff" stroke-width="1"/>
<rect x="331.5" y="459.5" width="13" height="18" fill="none" stroke="#ffffff" stroke-width="1"/>
<path d="M331 468.5H345" stroke="#ffffff" stroke-width="1"/>
<path d="M338.5 462V483" stroke="#c03434" stroke-width="1"/>
<path d="M333.5 461V471" stroke="#c03434" stroke-width="1"/>
<path d="M342.5 461V471" stroke="#c03434" stroke-width="1"/>
<rect x="335.5" y="472.5" width="5" height="5" fill="none" stroke="#ffffff" stroke-width="1"/>
<rect x="337" y="470" width="2" height="2" fill="#ffffff"/>
<rect x="333.5" y="477.5" width="10" height="8" fill="none" stroke="#ffffff" stroke-width="1"/>
<path d="M299.5 462V471" stroke="#c03434" stroke-width="1"/>
<path d="M301.5 461V469" stroke="#c03434" stroke-width="1"/>
<rect x="304.5" y="468.5" width="24" height="17" fill="none" stroke="#ffffff" stroke-width="1"/>
<path d="M306.5 485.5L309.5 470.5L323.5 470.5L326.5 485.5" stroke="#ffffff" stroke-width="1" fill="none"/>
<rect x="310" y="472" width="3" height="4" fill="#ffffff"/>
<rect x="314" y="471" width="2" height="3" fill="#ffffff"/>
<rect x="318" y="471" width="2" height="3" fill="#ffffff"/>
<rect x="321" y="472" width="3" height="4" fill="#ffffff"/>
<rect x="309" y="478" width="3" height="6" fill="#ffffff"/>
<rect x="314" y="476" width="5" height="4" fill="#ffffff"/>
<rect x="322" y="478" width="3" height="6" fill="#ffffff"/>
<rect x="312" y="481" width="3" height="4" fill="#ffffff"/>
<rect x="318" y="481" width="3" height="4" fill="#ffffff"/>
<rect x="307" y="482" width="2" height="3" fill="#ffffff"/>
<rect x="325" y="482" width="2" height="3" fill="#ffffff"/>
<rect x="312" y="476" width="2" height="2" fill="#c02020"/>
<rect x="320" y="476" width="2" height="2" fill="#c02020"/>
<rect x="316" y="482" width="2" height="2" fill="#c02020"/>
<rect x="310" y="479" width="2" height="2" fill="#c02020"/>
<rect x="321" y="479" width="2" height="2" fill="#c02020"/>
<rect x="312" y="472" width="2" height="2" fill="#c02020"/>
<rect x="318" y="472" width="2" height="2" fill="#c02020"/>
<path d="M316.5 440V501" stroke="#c03434" stroke-width="1"/>
<path d="M302.5 470V486" stroke="#ffffff" stroke-width="1"/>
<path d="M330.5 470V486" stroke="#ffffff" stroke-width="1"/>
<rect x="284.5" y="485.5" width="65" height="7" fill="none" stroke="#ffffff" stroke-width="1"/>
<path d="M284 488.5H350" stroke="#ffffff" stroke-width="1"/>
<path d="M308.5 481V498" stroke="#c03434" stroke-width="1" stroke-dasharray="3 1"/>
<path d="M335.5 481V498" stroke="#c03434" stroke-width="1" stroke-dasharray="3 1"/>
<path d="M288.5 492.5L288.5 496.5L345.5 496.5L345.5 492.5" stroke="#ffffff" stroke-width="1" fill="none"/>
<path d="M290.5 496.5L291.5 498.5" stroke="#ffffff" stroke-width="1" fill="none"/>
<path d="M343.5 496.5L342.5 498.5" stroke="#ffffff" stroke-width="1" fill="none"/>
<path d="M293.5 496V549" stroke="#ffffff" stroke-width="1"/>
<path d="M338.5 496V549" stroke="#ffffff" stroke-width="1"/>
<path d="M293 548.5H339" stroke="#ffffff" stroke-width="1"/>
<path d="M295.5 548.5L295.5 553.5L336.5 553.5L336.5 548.5" stroke="#ffffff" stroke-width="1" fill="none"/>
<path d="M298.5 553V577" stroke="#ffffff" stroke-width="1"/>
<path d="M333.5 553V577" stroke="#ffffff" stroke-width="1"/>
<path d="M298 576.5H334" stroke="#ffffff" stroke-width="1"/>
<path d="M302.5 576.5L302.5 611.5L330.5 611.5L330.5 576.5" stroke="#ffffff" stroke-width="1" fill="none"/>
<rect x="307.5" y="585.5" width="19" height="18" fill="none" stroke="#ffffff" stroke-width="1"/>
<path d="M294 593.5H297" stroke="#c03434" stroke-width="1"/>
<path d="M295.5 592V595" stroke="#c03434" stroke-width="1"/>
<path d="M336 593.5H339" stroke="#c03434" stroke-width="1"/>
<path d="M337.5 592V595" stroke="#c03434" stroke-width="1"/>
<path d="M315 615.5H318" stroke="#c03434" stroke-width="1"/>
<path d="M316.5 614V617" stroke="#c03434" stroke-width="1"/>
<rect x="254" y="408" width="3" height="4" fill="#ffffff"/>
<path d="M252 411.5H259" stroke="#ffffff" stroke-width="1"/>
<path d="M258.5 411.5L297.5 456.5" stroke="#ffffff" stroke-width="1"/>
<rect x="280" y="408" width="2" height="4" fill="#ffffff"/>
<path d="M277 411.5H284" stroke="#ffffff" stroke-width="1"/>
<path d="M283.5 411.5L309.5 454.5" stroke="#ffffff" stroke-width="1"/>
<rect x="296" y="408" width="3" height="4" fill="#ffffff"/>
<path d="M293 411.5H300" stroke="#ffffff" stroke-width="1"/>
<path d="M299.5 411.5L313.5 455.5" stroke="#ffffff" stroke-width="1"/>
<path d="M798.5 229.5L798.5 216.5L817.5 216.5L817.5 229.5" stroke="#ffffff" stroke-width="1" fill="none"/>
<path d="M798.5 239.5L798.5 253.5L817.5 253.5L817.5 239.5" stroke="#ffffff" stroke-width="1" fill="none"/>
<path d="M817 216.5H839" stroke="#50c050" stroke-width="1"/>
<path d="M838.5 216V230" stroke="#50c050" stroke-width="1"/>
<path d="M838.5 239.5L838.5 245.5L845.5 245.5L846.5 249.5L844.5 253.5L840.5 257.5L834.5 258.5L826.5 256.5L817.5 252.5" stroke="#50c050" stroke-width="1" fill="none"/>
<rect x="794" y="227" width="55" height="16" fill="#000"/>
<path d="M792 234.5H851" stroke="#c03434" stroke-width="1"/>
<rect x="793.5" y="227.5" width="5" height="15" fill="none" stroke="#ffffff" stroke-width="1"/>
<path d="M798 229.5H839" stroke="#ffffff" stroke-width="2"/>
<path d="M798 239.5H839" stroke="#ffffff" stroke-width="2"/>
<path d="M819.5 229V241" stroke="#ffffff" stroke-width="1"/>
<path d="M820.5 229V241" stroke="#ffffff" stroke-width="1"/>
<rect x="827" y="231" width="1" height="7" fill="#ffffff"/>
<rect x="830" y="231" width="1" height="7" fill="#ffffff"/>
<path d="M839.5 227V243" stroke="#ffffff" stroke-width="1"/>
<path d="M838 229.5H847" stroke="#ffffff" stroke-width="1"/>
<path d="M838 239.5H847" stroke="#ffffff" stroke-width="1"/>
<path d="M794 229.5H799" stroke="#ffffff" stroke-width="1"/>
<path d="M794 239.5H799" stroke="#ffffff" stroke-width="1"/>
<path d="M792 234.5H851" stroke="#c03434" stroke-width="1"/>
<rect x="816" y="209" width="6" height="6" fill="#00ff00"/>
<rect x="818" y="207" width="3" height="2" fill="#00ff00"/>
<rect x="678" y="656" width="100" height="5" fill="#00ffff"/>
<rect x="679" y="679" width="71" height="5" fill="#00ffff"/>
<rect x="859" y="507" width="22" height="4" fill="#ffffff"/>
<rect x="892" y="507" width="26" height="4" fill="#ffffff"/>
<rect x="935" y="507" width="30" height="4" fill="#ffffff"/>
<rect x="859" y="513" width="21" height="4" fill="#ffffff"/>
<rect x="892" y="513" width="33" height="4" fill="#ffffff"/>
<rect x="935" y="513" width="26" height="4" fill="#ffffff"/>
<rect x="859" y="518" width="21" height="5" fill="#ffffff"/>
<rect x="892" y="518" width="33" height="5" fill="#ffffff"/>
<rect x="935" y="518" width="26" height="5" fill="#ffffff"/>
<rect x="859" y="537" width="21" height="3" fill="#ffffff"/>
<rect x="892" y="537" width="33" height="3" fill="#ffffff"/>
<rect x="935" y="537" width="26" height="3" fill="#ffffff"/>
<rect x="859" y="548" width="12" height="4" fill="#ffffff"/>
<rect x="892" y="548" width="6" height="4" fill="#ffffff"/>
<rect x="935" y="548" width="6" height="4" fill="#ffffff"/>
<rect x="859" y="554" width="6" height="4" fill="#ffffff"/>
<rect x="892" y="554" width="8" height="4" fill="#ffffff"/>
<rect x="935" y="554" width="9" height="4" fill="#ffffff"/>
<rect x="859" y="560" width="15" height="4" fill="#ffffff"/>
<rect x="892" y="560" width="35" height="4" fill="#ffffff"/>
<rect x="859" y="566" width="6" height="4" fill="#ffffff"/>
<rect x="892" y="566" width="11" height="4" fill="#ffffff"/>
<rect x="935" y="566" width="8" height="4" fill="#ffffff"/>
<rect x="859" y="572" width="15" height="3" fill="#ffffff"/>
<rect x="892" y="572" width="8" height="3" fill="#ffffff"/>
<rect x="859" y="577" width="21" height="4" fill="#ffffff"/>
<rect x="892" y="577" width="6" height="4" fill="#ffffff"/>
<rect x="859" y="583" width="6" height="4" fill="#ffffff"/>
<rect x="892" y="583" width="6" height="4" fill="#ffffff"/>
<rect x="935" y="583" width="6" height="4" fill="#ffffff"/>
<rect x="859" y="589" width="6" height="4" fill="#ffffff"/>
<rect x="892" y="589" width="8" height="4" fill="#ffffff"/>
<rect x="935" y="589" width="6" height="4" fill="#ffffff"/>
<rect x="859" y="595" width="21" height="4" fill="#ffffff"/>
<rect x="892" y="595" width="33" height="4" fill="#ffffff"/>
<rect x="935" y="595" width="26" height="4" fill="#ffffff"/>
<rect x="859" y="601" width="12" height="4" fill="#ffffff"/>
<rect x="892" y="601" width="11" height="4" fill="#ffffff"/>
<rect x="859" y="607" width="21" height="4" fill="#ffffff"/>
<rect x="892" y="607" width="32" height="4" fill="#ffffff"/>
<rect x="935" y="607" width="26" height="4" fill="#ffffff"/>
<rect x="859" y="612" width="13" height="4" fill="#ffffff"/>
<rect x="892" y="612" width="11" height="4" fill="#ffffff"/>
<rect x="935" y="612" width="26" height="4" fill="#ffffff"/>
<rect x="859" y="617" width="18" height="5" fill="#ffffff"/>
<rect x="892" y="617" width="33" height="5" fill="#ffffff"/>
<rect x="935" y="617" width="26" height="5" fill="#ffffff"/>
<rect x="859" y="624" width="6" height="4" fill="#ffffff"/>
<rect x="892" y="624" width="8" height="4" fill="#ffffff"/>
<rect x="935" y="624" width="6" height="4" fill="#ffffff"/>
<rect x="859" y="630" width="16" height="4" fill="#ffffff"/>
<rect x="892" y="630" width="6" height="4" fill="#ffffff"/>
<rect x="935" y="630" width="26" height="4" fill="#ffffff"/>
<rect x="859" y="636" width="12" height="4" fill="#ffffff"/>
<rect x="892" y="636" width="8" height="4" fill="#ffffff"/>
<rect x="935" y="636" width="6" height="4" fill="#ffffff"/>
<rect x="859" y="642" width="12" height="4" fill="#ffffff"/>
<rect x="892" y="642" width="20" height="4" fill="#ffffff"/>
<rect x="935" y="642" width="26" height="4" fill="#ffffff"/>
<rect x="859" y="648" width="21" height="3" fill="#ffffff"/>
<rect x="892" y="648" width="33" height="3" fill="#ffffff"/>
<rect x="935" y="648" width="26" height="3" fill="#ffffff"/>
<rect x="859" y="653" width="19" height="4" fill="#ffffff"/>
<rect x="892" y="653" width="11" height="4" fill="#ffffff"/>
<rect x="935" y="653" width="26" height="4" fill="#ffffff"/>
<rect x="852" y="507" width="3" height="4" fill="#ffffff"/>
<rect x="928" y="507" width="3" height="4" fill="#ffffff"/>
<rect x="852" y="513" width="3" height="4" fill="#ffffff"/>
<rect x="928" y="513" width="3" height="4" fill="#ffffff"/>
<rect x="852" y="519" width="3" height="4" fill="#ffffff"/>
<rect x="928" y="519" width="3" height="4" fill="#ffffff"/>
<rect x="852" y="525" width="3" height="4" fill="#ffffff"/>
<rect x="852" y="531" width="3" height="4" fill="#ffffff"/>
<rect x="852" y="537" width="3" height="3" fill="#ffffff"/>
<rect x="928" y="537" width="3" height="3" fill="#ffffff"/>
<rect x="852" y="542" width="3" height="4" fill="#ffffff"/>
<rect x="852" y="548" width="3" height="4" fill="#ffffff"/>
<rect x="928" y="548" width="3" height="4" fill="#ffffff"/>
<rect x="852" y="554" width="3" height="4" fill="#ffffff"/>
<rect x="928" y="554" width="3" height="4" fill="#ffffff"/>
<rect x="852" y="560" width="3" height="4" fill="#ffffff"/>
<rect x="928" y="560" width="3" height="4" fill="#ffffff"/>
<rect x="852" y="566" width="3" height="4" fill="#ffffff"/>
<rect x="928" y="566" width="3" height="4" fill="#ffffff"/>
<rect x="852" y="572" width="3" height="3" fill="#ffffff"/>
<rect x="928" y="572" width="3" height="3" fill="#ffffff"/>
<rect x="852" y="577" width="3" height="4" fill="#ffffff"/>
<rect x="928" y="577" width="3" height="4" fill="#ffffff"/>
<rect x="852" y="583" width="3" height="4" fill="#ffffff"/>
<rect x="928" y="583" width="3" height="4" fill="#ffffff"/>
<rect x="852" y="589" width="3" height="4" fill="#ffffff"/>
<rect x="928" y="589" width="3" height="4" fill="#ffffff"/>
<rect x="852" y="595" width="3" height="4" fill="#ffffff"/>
<rect x="928" y="595" width="3" height="4" fill="#ffffff"/>
<rect x="852" y="601" width="3" height="4" fill="#ffffff"/>
<rect x="928" y="601" width="3" height="4" fill="#ffffff"/>
<rect x="852" y="607" width="3" height="4" fill="#ffffff"/>
<rect x="928" y="607" width="3" height="4" fill="#ffffff"/>
<rect x="852" y="613" width="3" height="3" fill="#ffffff"/>
<rect x="928" y="613" width="3" height="3" fill="#ffffff"/>
<rect x="852" y="618" width="3" height="4" fill="#ffffff"/>
<rect x="928" y="618" width="3" height="4" fill="#ffffff"/>
<rect x="852" y="624" width="3" height="4" fill="#ffffff"/>
<rect x="928" y="624" width="3" height="4" fill="#ffffff"/>
<rect x="852" y="630" width="3" height="4" fill="#ffffff"/>
<rect x="928" y="630" width="3" height="4" fill="#ffffff"/>
<rect x="852" y="636" width="3" height="4" fill="#ffffff"/>
<rect x="928" y="636" width="3" height="4" fill="#ffffff"/>
<rect x="852" y="642" width="3" height="4" fill="#ffffff"/>
<rect x="928" y="642" width="3" height="4" fill="#ffffff"/>
<rect x="852" y="648" width="3" height="3" fill="#ffffff"/>
<rect x="928" y="648" width="3" height="3" fill="#ffffff"/>
<rect x="852" y="653" width="3" height="4" fill="#ffffff"/>
<rect x="928" y="653" width="3" height="4" fill="#ffffff"/>
<rect x="852" y="448" width="5" height="57" fill="#00ff00"/>
<rect x="929" y="483" width="4" height="22" fill="#00ff00"/>
<rect x="860" y="530" width="29" height="5" fill="#00ff00"/>
<rect x="859" y="541" width="29" height="5" fill="#00ff00"/>
<rect x="852" y="659" width="5" height="9" fill="#000"/>
<rect x="892" y="659" width="35" height="9" fill="#000"/>
<rect x="858" y="659" width="33" height="9" fill="#000"/>
<rect x="928" y="660" width="5" height="6" fill="#ffffff"/>
<rect x="967" y="658" width="5" height="4" fill="#ffffff"/>
<rect x="976" y="658" width="6" height="4" fill="#ffffff"/>
<rect x="972" y="664" width="5" height="4" fill="#ffffff"/>
<path d="M965 663.5H985" stroke="#ffffff" stroke-width="1"/>
<path d="M851.5 668V715" stroke="#ffffff" stroke-width="1"/>
<path d="M1000.5 668V715" stroke="#ffffff" stroke-width="1"/>
<path d="M851 714.5H1001" stroke="#ffffff" stroke-width="1"/>
<path d="M851 668.5H918" stroke="#ffffff" stroke-width="1"/>
<path d="M851 674.5H918" stroke="#ffffff" stroke-width="1"/>
<path d="M851 680.5H918" stroke="#ffffff" stroke-width="1"/>
<path d="M851 686.5H918" stroke="#ffffff" stroke-width="1"/>
<path d="M851 691.5H918" stroke="#ffffff" stroke-width="1"/>
<path d="M851 697.5H918" stroke="#ffffff" stroke-width="1"/>
<path d="M851 703.5H918" stroke="#ffffff" stroke-width="1"/>
<path d="M851 709.5H918" stroke="#ffffff" stroke-width="1"/>
<path d="M851 714.5H918" stroke="#ffffff" stroke-width="1"/>
<path d="M859.5 668V692" stroke="#ffffff" stroke-width="1"/>
<path d="M867.5 668V692" stroke="#ffffff" stroke-width="1"/>
<path d="M881.5 668V692" stroke="#ffffff" stroke-width="1"/>
<path d="M894.5 668V692" stroke="#ffffff" stroke-width="1"/>
<path d="M904.5 668V692" stroke="#ffffff" stroke-width="1"/>
<path d="M861.5 691V715" stroke="#ffffff" stroke-width="1"/>
<path d="M871.5 691V715" stroke="#ffffff" stroke-width="1"/>
<path d="M885.5 691V715" stroke="#ffffff" stroke-width="1"/>
<path d="M894.5 691V715" stroke="#ffffff" stroke-width="1"/>
<path d="M904.5 691V715" stroke="#ffffff" stroke-width="1"/>
<path d="M917.5 668V715" stroke="#ffffff" stroke-width="1"/>
<rect x="852" y="687" width="6" height="4" fill="#00ff00"/>
<rect x="860" y="687" width="6" height="4" fill="#00ff00"/>
<rect x="872" y="687" width="5" height="4" fill="#00ff00"/>
<rect x="881" y="687" width="13" height="4" fill="#00ff00"/>
<rect x="896" y="687" width="6" height="4" fill="#00ff00"/>
<rect x="905" y="687" width="12" height="4" fill="#00ff00"/>
<rect x="853" y="693" width="5" height="4" fill="#00ff00"/>
<rect x="885" y="693" width="8" height="4" fill="#00ff00"/>
<rect x="853" y="705" width="5" height="4" fill="#00ff00"/>
<rect x="853" y="711" width="5" height="4" fill="#00ff00"/>
<rect x="886" y="711" width="6" height="4" fill="#00ff00"/>
<path d="M959.5 668V715" stroke="#ffffff" stroke-width="1"/>
<path d="M917 691.5H960" stroke="#ffffff" stroke-width="1"/>
<path d="M917 700.5H960" stroke="#ffffff" stroke-width="1"/>
<path d="M917 707.5H960" stroke="#ffffff" stroke-width="1"/>
<path d="M939.5 691V708" stroke="#ffffff" stroke-width="1"/>
<path d="M949.5 691V708" stroke="#ffffff" stroke-width="1"/>
<path d="M923.5 700V708" stroke="#ffffff" stroke-width="1"/>
<path d="M928.5 700V708" stroke="#ffffff" stroke-width="1"/>
<path d="M933.5 700V708" stroke="#ffffff" stroke-width="1"/>
<rect x="922" y="694" width="12" height="5" fill="#00ff00"/>
<rect x="941" y="695" width="6" height="4" fill="#30e030"/>
<rect x="951" y="694" width="6" height="5" fill="#00ff00"/>
<rect x="952" y="702" width="4" height="4" fill="#00ff00"/>
<rect x="920" y="710" width="4" height="5" fill="#00ff00"/>
<rect x="931" y="710" width="4" height="5" fill="#00ff00"/>
<rect x="942" y="710" width="3" height="5" fill="#00ff00"/>
<rect x="953" y="710" width="4" height="5" fill="#00ff00"/>
<path d="M959 682.5H1001" stroke="#ffffff" stroke-width="1"/>
<path d="M959 697.5H1001" stroke="#ffffff" stroke-width="1"/>
<path d="M959 707.5H1001" stroke="#ffffff" stroke-width="1"/>
<rect x="0" y="0" width="1036" height="15" fill="#f0f0f0"/>
<rect x="0" y="15" width="1036" height="1" fill="#f8f8f8"/>
<rect x="0" y="16" width="1036" height="1" fill="#a0a0a0"/>
<rect x="0" y="17" width="1036" height="1" fill="#ececec"/>
<rect x="0" y="18" width="1036" height="1" fill="#8c8c8c"/>
<rect x="0" y="19" width="1036" height="1" fill="#444444"/>
<rect x="489" y="0" width="299" height="15" fill="#ffffff"/>
<rect x="877" y="0" width="98" height="15" fill="#ffffff"/>
<rect x="1006" y="0" width="30" height="15" fill="#ffffff"/>
<rect x="101" y="0" width="1" height="14" fill="#9a9a9a"/>
<rect x="102" y="0" width="1" height="14" fill="#ffffff"/>
<rect x="179" y="0" width="1" height="14" fill="#9a9a9a"/>
<rect x="180" y="0" width="1" height="14" fill="#ffffff"/>
<rect x="277" y="0" width="1" height="14" fill="#9a9a9a"/>
<rect x="278" y="0" width="1" height="14" fill="#ffffff"/>
<rect x="421" y="0" width="1" height="14" fill="#9a9a9a"/>
<rect x="422" y="0" width="1" height="14" fill="#ffffff"/>
<rect x="977" y="0" width="1" height="14" fill="#9a9a9a"/>
<rect x="978" y="0" width="1" height="14" fill="#ffffff"/>
<rect x="453" y="0" width="1" height="16" fill="#b8b8b8"/>
<rect x="454" y="0" width="1" height="16" fill="#ffffff"/>
<rect x="457" y="0" width="1" height="16" fill="#b8b8b8"/>
<rect x="458" y="0" width="1" height="16" fill="#ffffff"/>
<rect x="843" y="0" width="1" height="16" fill="#b8b8b8"/>
<rect x="844" y="0" width="1" height="16" fill="#ffffff"/>
<rect x="847" y="0" width="1" height="16" fill="#b8b8b8"/>
<rect x="848" y="0" width="1" height="16" fill="#ffffff"/>
<rect x="461" y="0" width="1" height="16" fill="#c8c8c8"/>
<rect x="838" y="0" width="1" height="16" fill="#c8c8c8"/>
</svg>
<svg id="smooth" width="1036" height="737" viewBox="0 0 1036 737" fill="none">
<circle cx="294.5" cy="107.5" r="1.7" fill="none" stroke="#ffffff" stroke-width="1.3"/>
<circle cx="337.5" cy="107.5" r="1.7" fill="none" stroke="#ffffff" stroke-width="1.3"/>
<circle cx="294.5" cy="220.5" r="1.7" fill="none" stroke="#ffffff" stroke-width="1.3"/>
<circle cx="337.5" cy="220.5" r="1.7" fill="none" stroke="#ffffff" stroke-width="1.3"/>
<path d="M298.7 576.5 A25.3 25.3 0 1 0 334.3 576.5" stroke="#fff" stroke-width="1" fill="none"/>
<circle cx="316.5" cy="595" r="21" stroke="#c03434" stroke-width="1" fill="none" stroke-dasharray="7 2 2 2"/>
<circle cx="296.1" cy="594.3" r="3" stroke="#fff" stroke-width="1.6" fill="none"/>
<circle cx="337.8" cy="594.3" r="3" stroke="#fff" stroke-width="1.6" fill="none"/>
<circle cx="317.0" cy="615.9" r="3" stroke="#fff" stroke-width="1.6" fill="none"/>
<clipPath id="hc1"><rect x="799" y="217" width="18" height="12"/></clipPath><path clip-path="url(#hc1)" d="M787.0 229L799.0 217M790.0 229L802.0 217M793.0 229L805.0 217M796.0 229L808.0 217M799.0 229L811.0 217M802.0 229L814.0 217M805.0 229L817.0 217M808.0 229L820.0 217M811.0 229L823.0 217M814.0 229L826.0 217M817.0 229L829.0 217M820.0 229L832.0 217M823.0 229L835.0 217M826.0 229L838.0 217" stroke="#28d828" stroke-width="0.95" fill="none"/>
<clipPath id="hc2"><rect x="799" y="240" width="18" height="13"/></clipPath><path clip-path="url(#hc2)" d="M786.0 253L799.0 240M789.0 253L802.0 240M792.0 253L805.0 240M795.0 253L808.0 240M798.0 253L811.0 240M801.0 253L814.0 240M804.0 253L817.0 240M807.0 253L820.0 240M810.0 253L823.0 240M813.0 253L826.0 240M816.0 253L829.0 240M819.0 253L832.0 240M822.0 253L835.0 240M825.0 253L838.0 240M828.0 253L841.0 240" stroke="#28d828" stroke-width="0.95" fill="none"/>
<clipPath id="hc3"><rect x="818" y="217" width="20" height="12"/></clipPath><path clip-path="url(#hc3)" d="M806.0 217L818.0 229M809.0 217L821.0 229M812.0 217L824.0 229M815.0 217L827.0 229M818.0 217L830.0 229M821.0 217L833.0 229M824.0 217L836.0 229M827.0 217L839.0 229M830.0 217L842.0 229M833.0 217L845.0 229M836.0 217L848.0 229M839.0 217L851.0 229M842.0 217L854.0 229M845.0 217L857.0 229M848.0 217L860.0 229" stroke="#28d828" stroke-width="0.95" fill="none"/>
<clipPath id="hc4"><path d="M818 240H838V246H845.5L846.8 249.5L845 253.5L840 257.5L834 259L826 257L818 252.5Z"/></clipPath><path clip-path="url(#hc4)" d="M799.0 240L818.0 259M802.0 240L821.0 259M805.0 240L824.0 259M808.0 240L827.0 259M811.0 240L830.0 259M814.0 240L833.0 259M817.0 240L836.0 259M820.0 240L839.0 259M823.0 240L842.0 259M826.0 240L845.0 259M829.0 240L848.0 259M832.0 240L851.0 259M835.0 240L854.0 259M838.0 240L857.0 259M841.0 240L860.0 259M844.0 240L863.0 259M847.0 240L866.0 259M850.0 240L869.0 259M853.0 240L872.0 259M856.0 240L875.0 259M859.0 240L878.0 259M862.0 240L881.0 259M865.0 240L884.0 259" stroke="#28d828" stroke-width="0.95" fill="none"/>
<path d="M838.5 227.5H845Q849 230 849 234.5Q849 239 845 242.5H838.5Z" stroke="#fff" stroke-width="1.2" fill="none"/>
<text x="708.2" y="653.2" font-size="5.0" fill="#00ffff" font-family='"Liberation Sans", "Noto Sans CJK SC", sans-serif' font-weight="bold" text-anchor="start" textLength="17.6" lengthAdjust="spacingAndGlyphs" stroke="#00ffff" stroke-width="0.7" stroke-linejoin="round">技术要求</text>
<text x="679.3" y="668.4" font-size="4.8" fill="#00ffff" font-family='"Liberation Sans", "Noto Sans CJK SC", sans-serif' font-weight="bold" text-anchor="start" textLength="41" lengthAdjust="spacingAndGlyphs" stroke="#00ffff" stroke-width="0.7" stroke-linejoin="round">1.装配前各零件应清洗;</text>
<text x="679.3" y="676.2" font-size="4.8" fill="#00ffff" font-family='"Liberation Sans", "Noto Sans CJK SC", sans-serif' font-weight="bold" text-anchor="start" textLength="90.3" lengthAdjust="spacingAndGlyphs" stroke="#00ffff" stroke-width="0.7" stroke-linejoin="round">2.装配后, 运动, 滑动处按规定涂抹相应的润滑脂。</text>
<text x="-3.5" y="738.6" font-size="12" fill="#000" font-family='"Liberation Sans", "Noto Sans CJK SC", sans-serif' font-weight="normal" text-anchor="start">局2</text>
<path d="M24.5 728L21.5 737" stroke="#000" stroke-width="1"/>
<text x="861.9" y="452.44" font-size="5.0" fill="#00ff00" font-family='"Liberation Sans", "Noto Sans CJK SC", sans-serif' font-weight="bold" text-anchor="start" textLength="24.1" lengthAdjust="spacingAndGlyphs" stroke="#00ff00" stroke-width="0.7" stroke-linejoin="round">JXZY-000-10</text>
<text x="905.5" y="452.44" font-size="5.0" fill="#00ff00" font-family='"Liberation Sans", "Noto Sans CJK SC", sans-serif' font-weight="bold" text-anchor="start" textLength="4.5" lengthAdjust="spacingAndGlyphs" stroke="#00ff00" stroke-width="0.7" stroke-linejoin="round">轴</text>
<text x="929.3" y="452.44" font-size="5.0" fill="#00ff00" font-family='"Liberation Sans", "Noto Sans CJK SC", sans-serif' font-weight="bold" text-anchor="start" textLength="3" lengthAdjust="spacingAndGlyphs" stroke="#00ff00" stroke-width="0.6" stroke-linejoin="round">1</text>
<text x="869.3" y="458.28000000000003" font-size="5.0" fill="#00ff00" font-family='"Liberation Sans", "Noto Sans CJK SC", sans-serif' font-weight="bold" text-anchor="start" textLength="8.4" lengthAdjust="spacingAndGlyphs" stroke="#00ff00" stroke-width="0.7" stroke-linejoin="round">GB41</text>
<text x="898.0" y="458.28000000000003" font-size="5.0" fill="#00ff00" font-family='"Liberation Sans", "Noto Sans CJK SC", sans-serif' font-weight="bold" text-anchor="start" textLength="19.0" lengthAdjust="spacingAndGlyphs" stroke="#00ff00" stroke-width="0.7" stroke-linejoin="round">六角螺母M10</text>
<text x="929.3" y="458.28000000000003" font-size="5.0" fill="#00ff00" font-family='"Liberation Sans", "Noto Sans CJK SC", sans-serif' font-weight="bold" text-anchor="start" textLength="3" lengthAdjust="spacingAndGlyphs" stroke="#00ff00" stroke-width="0.6" stroke-linejoin="round">4</text>
<text x="868.0" y="464.12" font-size="5.0" fill="#00ff00" font-family='"Liberation Sans", "Noto Sans CJK SC", sans-serif' font-weight="bold" text-anchor="start" textLength="12.0" lengthAdjust="spacingAndGlyphs" stroke="#00ff00" stroke-width="0.7" stroke-linejoin="round">GB5782</text>
<text x="902.7" y="464.12" font-size="5.0" fill="#00ff00" font-family='"Liberation Sans", "Noto Sans CJK SC", sans-serif' font-weight="bold" text-anchor="start" textLength="9.3" lengthAdjust="spacingAndGlyphs" stroke="#00ff00" stroke-width="0.7" stroke-linejoin="round">螺栓M8</text>
<text x="929.3" y="464.12" font-size="5.0" fill="#00ff00" font-family='"Liberation Sans", "Noto Sans CJK SC", sans-serif' font-weight="bold" text-anchor="start" textLength="3" lengthAdjust="spacingAndGlyphs" stroke="#00ff00" stroke-width="0.6" stroke-linejoin="round">1</text>
<text x="868.0" y="469.96000000000004" font-size="5.0" fill="#00ff00" font-family='"Liberation Sans", "Noto Sans CJK SC", sans-serif' font-weight="bold" text-anchor="start" textLength="11.6" lengthAdjust="spacingAndGlyphs" stroke="#00ff00" stroke-width="0.7" stroke-linejoin="round">GB5782</text>
<text x="903.6" y="469.96000000000004" font-size="5.0" fill="#00ff00" font-family='"Liberation Sans", "Noto Sans CJK SC", sans-serif' font-weight="bold" text-anchor="start" textLength="8.4" lengthAdjust="spacingAndGlyphs" stroke="#00ff00" stroke-width="0.7" stroke-linejoin="round">螺栓M6</text>
<text x="929.3" y="469.96000000000004" font-size="5.0" fill="#00ff00" font-family='"Liberation Sans", "Noto Sans CJK SC", sans-serif' font-weight="bold" text-anchor="start" textLength="3" lengthAdjust="spacingAndGlyphs" stroke="#00ff00" stroke-width="0.6" stroke-linejoin="round">8</text>
<text x="868.0" y="475.8" font-size="5.0" fill="#00ff00" font-family='"Liberation Sans", "Noto Sans CJK SC", sans-serif' font-weight="bold" text-anchor="start" textLength="11.6" lengthAdjust="spacingAndGlyphs" stroke="#00ff00" stroke-width="0.7" stroke-linejoin="round">GB5782</text>
<text x="903.6" y="475.8" font-size="5.0" fill="#00ff00" font-family='"Liberation Sans", "Noto Sans CJK SC", sans-serif' font-weight="bold" text-anchor="start" textLength="8.4" lengthAdjust="spacingAndGlyphs" stroke="#00ff00" stroke-width="0.7" stroke-linejoin="round">螺栓M5</text>
<text x="929.3" y="475.8" font-size="5.0" fill="#00ff00" font-family='"Liberation Sans", "Noto Sans CJK SC", sans-serif' font-weight="bold" text-anchor="start" textLength="3" lengthAdjust="spacingAndGlyphs" stroke="#00ff00" stroke-width="0.6" stroke-linejoin="round">1</text>
<text x="863.3" y="481.64000000000004" font-size="5.0" fill="#00ff00" font-family='"Liberation Sans", "Noto Sans CJK SC", sans-serif' font-weight="bold" text-anchor="start" textLength="21.7" lengthAdjust="spacingAndGlyphs" stroke="#00ff00" stroke-width="0.7" stroke-linejoin="round">JXZY-000-09</text>
<text x="903.6" y="481.64000000000004" font-size="5.0" fill="#00ff00" font-family='"Liberation Sans", "Noto Sans CJK SC", sans-serif' font-weight="bold" text-anchor="start" textLength="8.4" lengthAdjust="spacingAndGlyphs" stroke="#00ff00" stroke-width="0.7" stroke-linejoin="round">垫片</text>
<text x="929.3" y="481.64000000000004" font-size="5.0" fill="#00ff00" font-family='"Liberation Sans", "Noto Sans CJK SC", sans-serif' font-weight="bold" text-anchor="start" textLength="3" lengthAdjust="spacingAndGlyphs" stroke="#00ff00" stroke-width="0.6" stroke-linejoin="round">4</text>
<text x="869.3" y="487.48" font-size="5.0" fill="#00ff00" font-family='"Liberation Sans", "Noto Sans CJK SC", sans-serif' font-weight="bold" text-anchor="start" textLength="9.7" lengthAdjust="spacingAndGlyphs" stroke="#00ff00" stroke-width="0.7" stroke-linejoin="round">GB6170</text>
<text x="903.6" y="487.48" font-size="5.0" fill="#00ff00" font-family='"Liberation Sans", "Noto Sans CJK SC", sans-serif' font-weight="bold" text-anchor="start" textLength="8.4" lengthAdjust="spacingAndGlyphs" stroke="#00ff00" stroke-width="0.7" stroke-linejoin="round">螺母</text>
<text x="929.3" y="487.48" font-size="5.0" fill="#00ff00" font-family='"Liberation Sans", "Noto Sans CJK SC", sans-serif' font-weight="bold" text-anchor="start" textLength="3" lengthAdjust="spacingAndGlyphs" stroke="#00ff00" stroke-width="0.6" stroke-linejoin="round">8</text>
<text x="870.2" y="493.32000000000005" font-size="5.0" fill="#00ff00" font-family='"Liberation Sans", "Noto Sans CJK SC", sans-serif' font-weight="bold" text-anchor="start" textLength="7.9" lengthAdjust="spacingAndGlyphs" stroke="#00ff00" stroke-width="0.7" stroke-linejoin="round">GB70</text>
<text x="900.4" y="493.32000000000005" font-size="5.0" fill="#00ff00" font-family='"Liberation Sans", "Noto Sans CJK SC", sans-serif' font-weight="bold" text-anchor="start" textLength="14.3" lengthAdjust="spacingAndGlyphs" stroke="#00ff00" stroke-width="0.7" stroke-linejoin="round">内六角螺钉</text>
<text x="929.3" y="493.32000000000005" font-size="5.0" fill="#00ff00" font-family='"Liberation Sans", "Noto Sans CJK SC", sans-serif' font-weight="bold" text-anchor="start" textLength="3" lengthAdjust="spacingAndGlyphs" stroke="#00ff00" stroke-width="0.6" stroke-linejoin="round">8</text>
<text x="869.3" y="499.16" font-size="5.0" fill="#00ff00" font-family='"Liberation Sans", "Noto Sans CJK SC", sans-serif' font-weight="bold" text-anchor="start" textLength="8.8" lengthAdjust="spacingAndGlyphs" stroke="#00ff00" stroke-width="0.7" stroke-linejoin="round">GB93</text>
<text x="900.4" y="499.16" font-size="5.0" fill="#00ff00" font-family='"Liberation Sans", "Noto Sans CJK SC", sans-serif' font-weight="bold" text-anchor="start" textLength="14.3" lengthAdjust="spacingAndGlyphs" stroke="#00ff00" stroke-width="0.7" stroke-linejoin="round">弹簧垫圈</text>
<text x="929.3" y="499.16" font-size="5.0" fill="#00ff00" font-family='"Liberation Sans", "Noto Sans CJK SC", sans-serif' font-weight="bold" text-anchor="start" textLength="3" lengthAdjust="spacingAndGlyphs" stroke="#00ff00" stroke-width="0.6" stroke-linejoin="round">8</text>
<text x="869.3" y="505.0" font-size="5.0" fill="#00ff00" font-family='"Liberation Sans", "Noto Sans CJK SC", sans-serif' font-weight="bold" text-anchor="start" textLength="8.8" lengthAdjust="spacingAndGlyphs" stroke="#00ff00" stroke-width="0.7" stroke-linejoin="round">GB97</text>
<text x="900.4" y="505.0" font-size="5.0" fill="#00ff00" font-family='"Liberation Sans", "Noto Sans CJK SC", sans-serif' font-weight="bold" text-anchor="start" textLength="14.3" lengthAdjust="spacingAndGlyphs" stroke="#00ff00" stroke-width="0.7" stroke-linejoin="round">平垫圈8</text>
<text x="929.3" y="505.0" font-size="5.0" fill="#00ff00" font-family='"Liberation Sans", "Noto Sans CJK SC", sans-serif' font-weight="bold" text-anchor="start" textLength="3" lengthAdjust="spacingAndGlyphs" stroke="#00ff00" stroke-width="0.6" stroke-linejoin="round">8</text>
<text x="897.0" y="528.46" font-size="5.0" fill="#00ff00" font-family='"Liberation Sans", "Noto Sans CJK SC", sans-serif' font-weight="bold" text-anchor="start" textLength="28" lengthAdjust="spacingAndGlyphs" stroke="#00ff00" stroke-width="0.7" stroke-linejoin="round">圆柱滚子轴承</text>
<text x="929.5" y="528.46" font-size="5.0" fill="#00ff00" font-family='"Liberation Sans", "Noto Sans CJK SC", sans-serif' font-weight="bold" text-anchor="start" textLength="3" lengthAdjust="spacingAndGlyphs" stroke="#00ff00" stroke-width="0.6" stroke-linejoin="round">4</text>
<text x="901.5" y="534.3000000000001" font-size="5.0" fill="#00ff00" font-family='"Liberation Sans", "Noto Sans CJK SC", sans-serif' font-weight="bold" text-anchor="start" textLength="23.5" lengthAdjust="spacingAndGlyphs" stroke="#00ff00" stroke-width="0.7" stroke-linejoin="round">螺栓 M8</text>
<text x="929.5" y="534.3000000000001" font-size="5.0" fill="#00ff00" font-family='"Liberation Sans", "Noto Sans CJK SC", sans-serif' font-weight="bold" text-anchor="start" textLength="3" lengthAdjust="spacingAndGlyphs" stroke="#00ff00" stroke-width="0.6" stroke-linejoin="round">4</text>
<text x="901.5" y="545.98" font-size="5.0" fill="#00ff00" font-family='"Liberation Sans", "Noto Sans CJK SC", sans-serif' font-weight="bold" text-anchor="start" textLength="25.5" lengthAdjust="spacingAndGlyphs" stroke="#00ff00" stroke-width="0.7" stroke-linejoin="round">螺钉 M5×20</text>
<text x="929.5" y="545.98" font-size="5.0" fill="#00ff00" font-family='"Liberation Sans", "Noto Sans CJK SC", sans-serif' font-weight="bold" text-anchor="start" textLength="3" lengthAdjust="spacingAndGlyphs" stroke="#00ff00" stroke-width="0.6" stroke-linejoin="round">4</text>
<text x="853.0" y="666.0" font-size="5.2" fill="#ffffff" font-family='"Liberation Sans", "Noto Sans CJK SC", sans-serif' font-weight="bold" text-anchor="start" textLength="4" lengthAdjust="spacingAndGlyphs">序</text>
<text x="870.6" y="665.6" font-size="5.8" fill="#ffffff" font-family='"Liberation Sans", "Noto Sans CJK SC", sans-serif' font-weight="bold" text-anchor="start" textLength="9" lengthAdjust="spacingAndGlyphs" stroke="#ffffff" stroke-width="0.5" stroke-linejoin="round">代号</text>
<text x="905.0" y="665.6" font-size="5.8" fill="#ffffff" font-family='"Liberation Sans", "Noto Sans CJK SC", sans-serif' font-weight="bold" text-anchor="start" textLength="9" lengthAdjust="spacingAndGlyphs" stroke="#ffffff" stroke-width="0.5" stroke-linejoin="round">名称</text>
<text x="945.2" y="665.6" font-size="5.8" fill="#ffffff" font-family='"Liberation Sans", "Noto Sans CJK SC", sans-serif' font-weight="bold" text-anchor="start" textLength="9" lengthAdjust="spacingAndGlyphs" stroke="#ffffff" stroke-width="0.5" stroke-linejoin="round">数量</text>
<text x="988.4" y="665.6" font-size="5.8" fill="#ffffff" font-family='"Liberation Sans", "Noto Sans CJK SC", sans-serif' font-weight="bold" text-anchor="start" textLength="9" lengthAdjust="spacingAndGlyphs" stroke="#ffffff" stroke-width="0.5" stroke-linejoin="round">备注</text>
<path d="M-1.5 2.6Q2.4 1.2 2.4 4Q2.4 6 -0.5 6.2Q3 6.6 3 8.6Q3 11 -1.5 10.2" stroke="#222" stroke-width="1.1" fill="none"/>
<rect x="10.5" y="-2" width="11" height="9" fill="#cfe3f7" stroke="#3f77b5"/><rect x="14.5" y="1.5" width="11" height="9.5" fill="#d9e9f9" stroke="#3f77b5"/>
<path d="M34 0L44 -2L48 6L40 12L35 8Z" fill="#f2d98a" stroke="#b9962f"/><rect x="37.5" y="-1" width="8" height="8" fill="#dfe9f5" stroke="#7f98b8"/>
<path d="M58 9L63 5L66 7L61 10.5Z" fill="#2a2a2a"/><path d="M63 5L69 -1L71 0L66 7Z" fill="#e89a55"/>
<path d="M88 0L95 0L90 5L93 5L86 10L88 5L85 5Z" fill="#f3d04a" stroke="#c9a21e" stroke-width="0.6"/><rect x="81.5" y="3.5" width="7" height="7" fill="#f0a080" stroke="#2f62a0"/><rect x="79" y="9" width="3" height="3" fill="#1f5fa8"/>
<path d="M120 -1Q112 1 113 9" stroke="#17386e" stroke-width="3" fill="none"/><path d="M108 6L118 7L113 13Z" fill="#17386e"/>
<path d="M133 2H139L136 5Z" fill="#17386e"/>
<path d="M150 -1Q158 1 157 9" stroke="#b5b5b5" stroke-width="3" fill="none"/><path d="M152 6L162 6L157 12Z" fill="#b5b5b5"/>
<path d="M169 2H175L172 5Z" fill="#b0b0b0"/>
<path d="M186 1L189 -2L196.5 -2L198.5 3L197.5 7L194.5 9.5L190.5 7.5Z" fill="#dc9890" stroke="#b87068" stroke-width="0.6"/><path d="M188 -1L191 4M191 -2L193.5 3M194 -2L196 3" stroke="#c07870" stroke-width="0.7" fill="none"/><path d="M195 8.5L199 6.3L202.3 9L202.3 12.8L196.5 12.8Z" fill="#2c548c"/><path d="M197.5 -1.5L201.5 -1.5L199.5 1.8Z" fill="#2f5f9e"/>
<circle cx="215" cy="3" r="5.2" fill="#dce9f5" stroke="#7a8a9a" stroke-width="1.6"/><path d="M219 7L224 12" stroke="#b87a3a" stroke-width="2.4"/><path d="M221 0.5H226M223.5 -2V0.5" stroke="#2a4f8a" stroke-width="1"/>
<circle cx="238" cy="3" r="5.2" fill="#dce9f5" stroke="#7a8a9a" stroke-width="1.6"/><path d="M242 7L247 12" stroke="#b87a3a" stroke-width="2.4"/><rect x="235" y="0" width="6" height="5" fill="#9ab6d8" stroke="#2a4f8a"/><path d="M244 13L248 13L248 9Z" fill="#111"/>
<circle cx="261" cy="3" r="5.2" fill="#dce9f5" stroke="#7a8a9a" stroke-width="1.6"/><path d="M265 7L270 12" stroke="#b87a3a" stroke-width="2.4"/><path d="M258 5L258 0L263 0L263 3Z" fill="#2a4f8a"/>
<rect x="285" y="-1" width="8" height="5" fill="#d85a6a"/><rect x="285" y="0" width="6" height="3" fill="#4a6fd0"/><path d="M290 3L297 0L299 3L294 6Z" fill="#d8b0a0" stroke="#775"/><text x="284" y="12" font-size="8" font-family='"Liberation Sans",sans-serif' fill="#667">S</text><text x="293" y="12.5" font-size="9" font-weight="bold" font-family='"Liberation Sans",sans-serif' fill="#333">A</text>
<rect x="307.5" y="-2" width="15" height="14" fill="#dfe9f7" stroke="#2f5fa8" stroke-width="1.4"/><path d="M311 -2V12" stroke="#2f5fa8"/><path d="M309 1V10" stroke="#d8c040" stroke-dasharray="1 1"/><rect x="314" y="0" width="2.5" height="2.5" fill="#6f8fc0"/><rect x="318" y="0" width="2.5" height="2.5" fill="#6f8fc0"/><rect x="314" y="4" width="2.5" height="2.5" fill="#6f8fc0"/><rect x="317.5" y="6" width="3" height="3" fill="#e8e070" stroke="#667"/>
<rect x="330.5" y="-2" width="9" height="13.5" fill="#dfe9f7" stroke="#2f5fa8" stroke-width="1.4"/><rect x="333" y="2" width="2" height="2" fill="#567"/><rect x="333" y="6" width="2" height="2" fill="#567"/><path d="M339 1Q345 0 345 6" stroke="#2f5fa8" stroke-width="1.6" fill="none"/><path d="M342 5H348L345 9Z" fill="#1f3f78"/><rect x="343.5" y="8.5" width="3" height="3" fill="#f4f0c0" stroke="#555" stroke-width="0.6"/>
<path d="M353 -1L367 -3L369 8L355 12Z" fill="#c9d0d8"/><path d="M353 3L364 -1L368 9L357 12.5Z" fill="#8eaed0"/><path d="M354 1Q360 -2 367 1" stroke="#eef2f6" stroke-width="2" fill="none"/><path d="M355 7Q361 3 368 6" stroke="#e4eaf0" stroke-width="1.6" fill="none"/><circle cx="364.5" cy="3.5" r="2" fill="#aab4c0" stroke="#7f8a98" stroke-width="0.6"/>
<rect x="379" y="-2" width="12" height="13" fill="#e4e4e4" stroke="#999"/><path d="M378 0Q376 3 379 5Q377 9 381 8Q384 10 386 7Q389 7 388 3Q389 0 386 -1" stroke="#d8283a" stroke-width="1.6" fill="#fff"/>
<rect x="401" y="-3" width="12" height="15.5" rx="1" fill="#151515"/><rect x="403" y="-1" width="8" height="2.5" fill="#8ab08a"/>
<rect x="403" y="3" width="2" height="2" fill="#fff"/>
<rect x="403" y="6" width="2" height="2" fill="#fff"/>
<rect x="403" y="9" width="2" height="2" fill="#fff"/>
<rect x="406" y="3" width="2" height="2" fill="#fff"/>
<rect x="406" y="6" width="2" height="2" fill="#fff"/>
<rect x="406" y="9" width="2" height="2" fill="#fff"/>
<rect x="409" y="3" width="2" height="2" fill="#fff"/>
<rect x="409" y="6" width="2" height="2" fill="#fff"/>
<rect x="409" y="9" width="2" height="2" fill="#fff"/>
<rect x="403" y="3" width="2" height="2" fill="#e04040"/>
<rect x="429" y="-3" width="15" height="15" rx="1.5" fill="#2a63b0"/><rect x="429" y="-3" width="15" height="7" fill="#3c7ac8" opacity="0.7"/><text x="436.5" y="10.5" text-anchor="middle" font-size="13" font-weight="bold" font-family='"Liberation Sans",sans-serif' fill="#fff">?</text>
<path d="M469 2L477 -2L485 2L477 6Z" fill="#c9d8ea" stroke="#6f8fb8" stroke-width="0.6"/><path d="M469 5L477 1L485 5L477 9Z" fill="#c9d8ea" stroke="#6f8fb8" stroke-width="0.6"/><path d="M469 8L477 4L485 8L477 12Z" fill="#9fb8d8" stroke="#5f7fa8" stroke-width="0.6"/>
<path d="M500 -3Q504 -2 503 3L502 6H498L497 3Q496 -2 500 -3Z" fill="#fdf6c8" stroke="#c9a93a" stroke-width="0.8"/><rect x="498" y="6.5" width="4" height="3" fill="#777"/>
<circle cx="516.5" cy="2" r="6" fill="#f1de5a" stroke="#b9a02a" stroke-width="1.2"/><path d="M510 8L512 10M523 8L521 10" stroke="#7aa0c8" stroke-width="1.2"/>
<circle cx="532" cy="3" r="4.8" fill="#b8c8dc" stroke="#7f98b8" stroke-width="1.4"/><circle cx="532" cy="3" r="1.6" fill="#e8eef6"/><rect x="533.5" y="4.5" width="6" height="6" fill="#fff" stroke="#8a9ab0" stroke-width="0.8"/>
<rect x="546.5" y="2.5" width="10" height="7" rx="1" fill="#efe26a" stroke="#a8982a"/><path d="M544 0V4M546.5 -1V3M549.5 -2V3" stroke="#a8982a" stroke-width="1.4"/><path d="M553 2V-1Q555 -3 557 -1V2" stroke="#a8982a" stroke-width="1.2" fill="none"/>
<rect x="560.5" y="0.5" width="10" height="9" fill="#19e7ee" stroke="#000"/>
<text x="575.6" y="8.7" font-size="10" font-family='"Liberation Mono", monospace' fill="#000" textLength="23.5" lengthAdjust="spacingAndGlyphs">text</text>
<path d="M777.3 4.3H784.3L780.8 8Z" fill="#000"/>
<path d="M793 3L801 -1L808 3L800 7Z" fill="#b7cbe4" stroke="#6f8fb8" stroke-width="0.6"/><path d="M793 6L801 2L808 6L800 10Z" fill="#f0d040" stroke="#b89a20" stroke-width="0.6"/><path d="M792 12L796 8M796 8V11M796 8H793" stroke="#1f3f8a" stroke-width="1.1" fill="none"/>
<path d="M816 2L824 -2L832 2L824 6Z" fill="#c9d8ea" stroke="#6f8fb8" stroke-width="0.6"/><path d="M816 5L824 1L832 5L824 9Z" fill="#c9d8ea" stroke="#6f8fb8" stroke-width="0.6"/><path d="M816 8L824 4L832 8L824 12Z" fill="#9fb8d8" stroke="#5f7fa8" stroke-width="0.6"/>
<path d="M823 -3V2M820 0L823 4L826 0" stroke="#1f4f9a" stroke-width="1.8" fill="none"/>
<text x="856.5" y="9" font-size="13" font-family='"Liberation Sans",sans-serif' fill="#222">A</text><path d="M861 11L864 6L867 8Z" fill="#222"/><path d="M864 6L870 0L871.5 1.5L867 8Z" fill="#e89a55"/>
<text x="880.8" y="7.8" font-size="10" font-family='"Liberation Mono", monospace' fill="#000" textLength="47.5" lengthAdjust="spacingAndGlyphs">Standard</text>
<path d="M964 4.3H971L967.5 8Z" fill="#000"/>
<path d="M985.5 7V13M1000.5 7V13M985.5 10H1000.5" stroke="#111" stroke-width="1.2" fill="none"/><path d="M986 10L989 8.5V11.5ZM1000 10L997 8.5V11.5Z" fill="#111"/><path d="M991 8L994 4L996.5 6Z" fill="#222"/><path d="M994 4L998 -1L999.5 0.5L996.5 6Z" fill="#e89a55"/>
<text x="1010.6" y="7.8" font-size="10" font-family='"Liberation Mono", monospace' fill="#000" textLength="29.5" lengthAdjust="spacingAndGlyphs">ISO-2</text>
</svg>
<svg id="crisp2" width="1036" height="737" viewBox="0 0 1036 737" fill="none" shape-rendering="crispEdges">
<path d="M851 447.5H1001" stroke="#ffffff" stroke-width="1"/>
<path d="M851 453.5H1001" stroke="#ffffff" stroke-width="1"/>
<path d="M851 459.5H1001" stroke="#ffffff" stroke-width="1"/>
<path d="M851 465.5H1001" stroke="#ffffff" stroke-width="1"/>
<path d="M851 470.5H1001" stroke="#ffffff" stroke-width="1"/>
<path d="M851 476.5H1001" stroke="#ffffff" stroke-width="1"/>
<path d="M851 482.5H1001" stroke="#ffffff" stroke-width="1"/>
<path d="M851 488.5H1001" stroke="#ffffff" stroke-width="1"/>
<path d="M851 494.5H1001" stroke="#ffffff" stroke-width="1"/>
<path d="M851 500.5H1001" stroke="#ffffff" stroke-width="1"/>
<path d="M851 505.5H1001" stroke="#ffffff" stroke-width="1"/>
<path d="M851 511.5H1001" stroke="#ffffff" stroke-width="1"/>
<path d="M851 517.5H1001" stroke="#ffffff" stroke-width="1"/>
<path d="M851 523.5H1001" stroke="#ffffff" stroke-width="1"/>
<path d="M851 529.5H1001" stroke="#ffffff" stroke-width="1"/>
<path d="M851 535.5H1001" stroke="#ffffff" stroke-width="1"/>
<path d="M851 540.5H1001" stroke="#ffffff" stroke-width="1"/>
<path d="M851 546.5H1001" stroke="#ffffff" stroke-width="1"/>
<path d="M851 552.5H1001" stroke="#ffffff" stroke-width="1"/>
<path d="M851 558.5H1001" stroke="#ffffff" stroke-width="1"/>
<path d="M851 564.5H1001" stroke="#ffffff" stroke-width="1"/>
<path d="M851 570.5H1001" stroke="#ffffff" stroke-width="1"/>
<path d="M851 575.5H1001" stroke="#ffffff" stroke-width="1"/>
<path d="M851 581.5H1001" stroke="#ffffff" stroke-width="1"/>
<path d="M851 587.5H1001" stroke="#ffffff" stroke-width="1"/>
<path d="M851 593.5H1001" stroke="#ffffff" stroke-width="1"/>
<path d="M851 599.5H1001" stroke="#ffffff" stroke-width="1"/>
<path d="M851 605.5H1001" stroke="#ffffff" stroke-width="1"/>
<path d="M851 611.5H1001" stroke="#ffffff" stroke-width="1"/>
<path d="M851 616.5H1001" stroke="#ffffff" stroke-width="1"/>
<path d="M851 622.5H1001" stroke="#ffffff" stroke-width="1"/>
<path d="M851 628.5H1001" stroke="#ffffff" stroke-width="1"/>
<path d="M851 634.5H1001" stroke="#ffffff" stroke-width="1"/>
<path d="M851 640.5H1001" stroke="#ffffff" stroke-width="1"/>
<path d="M851 646.5H1001" stroke="#ffffff" stroke-width="1"/>
<path d="M851 651.5H1001" stroke="#ffffff" stroke-width="1"/>
<path d="M851 657.5H1001" stroke="#ffffff" stroke-width="1"/>
<path d="M851.5 447V669" stroke="#ffffff" stroke-width="1"/>
<path d="M1000.5 447V669" stroke="#ffffff" stroke-width="1"/>
<path d="M857.5 447V669" stroke="#ffffff" stroke-width="1"/>
<path d="M891.5 447V669" stroke="#ffffff" stroke-width="1"/>
<path d="M927.5 447V669" stroke="#ffffff" stroke-width="1"/>
<path d="M934.5 447V669" stroke="#ffffff" stroke-width="1"/>
<path d="M965.5 447V669" stroke="#ffffff" stroke-width="1"/>
<path d="M974.5 447V669" stroke="#ffffff" stroke-width="1"/>
<path d="M984.5 447V669" stroke="#ffffff" stroke-width="1"/>
<path d="M851 668.5H1001" stroke="#ffffff" stroke-width="1"/>
</svg>
</body>
</html>
